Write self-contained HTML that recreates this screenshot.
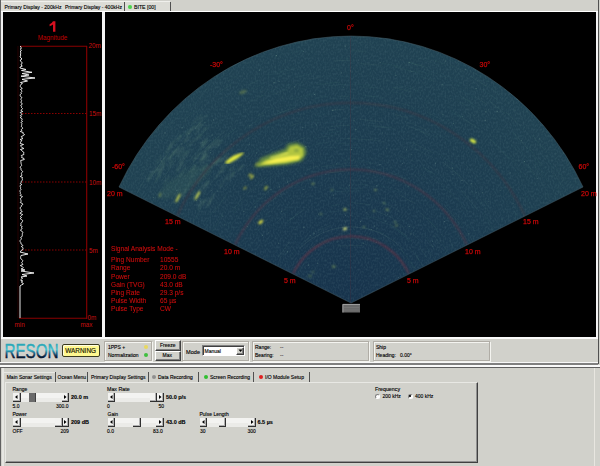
<!DOCTYPE html>
<html><head><meta charset="utf-8">
<style>
*{margin:0;padding:0;box-sizing:border-box}
html,body{width:600px;height:466px;overflow:hidden;background:#d1d1cb;font-family:"Liberation Sans",sans-serif;color:#000}
.abs{position:absolute}
.t{position:absolute;white-space:nowrap;color:#000;-webkit-text-stroke:0.12px #000}
svg{position:absolute;left:0;top:0}
</style></head><body>
<div class="abs" style="left:0px;top:0px;width:600px;height:12px;background:#d1d1cb"></div>
<div class="abs" style="left:1px;top:1px;width:169px;height:10px;background:#dcdcd6;border-top:1px solid #f0f0ec"></div>
<div class="t" style="left:4.5px;top:4.93px;font-size:5.05px;line-height:5.05px;">Primary Display - 200kHz</div>
<div class="t" style="left:65px;top:4.93px;font-size:5.05px;line-height:5.05px;">Primary Display - 400kHz</div>
<div class="abs" style="left:124px;top:2px;width:1px;height:9px;background:#505050"></div>
<div class="abs" style="left:127.5px;top:4.5px;width:4.5px;height:4.5px;border-radius:50%;background:#50d050;box-shadow:0 0 0.6px #a0f0a0"></div>
<div class="t" style="left:134px;top:4.79px;font-size:5.2px;line-height:5.2px;">BITE [00]</div>
<div class="abs" style="left:170px;top:2px;width:1px;height:9px;background:#505050"></div>
<div class="abs" style="left:0px;top:0px;width:1px;height:600px;background:#606060"></div>
<div class="abs" style="left:1px;top:11px;width:597px;height:1px;background:#fff"></div>
<div class="abs" style="left:1px;top:12px;width:2px;height:325px;background:#f0f0f0"></div>
<div class="abs" style="left:3px;top:12px;width:99px;height:325px;background:#000"></div>
<div class="abs" style="left:102px;top:12px;width:3px;height:325px;background:#f4f4f4"></div>
<div class="abs" style="left:105px;top:12px;width:491px;height:325px;background:#000"></div>
<div class="abs" style="left:596px;top:12px;width:2px;height:326px;background:#f4f4f4"></div>
<div class="abs" style="left:598px;top:0px;width:1px;height:364px;background:#505050"></div>
<svg width="105" height="337">
<g stroke="#8a0000" stroke-width="1.1" fill="none"><line x1="20" y1="46.3" x2="87" y2="46.3"/><line x1="19" y1="318.3" x2="87" y2="318.3"/><line x1="86.7" y1="46" x2="86.7" y2="319"/><line x1="18" y1="46" x2="18" y2="318" stroke="#300000" stroke-width="0.8"/><line x1="22" y1="113.5" x2="87" y2="113.5" stroke-dasharray="1.5,1.5"/><line x1="22" y1="182" x2="87" y2="182" stroke-dasharray="1.5,1.5"/><line x1="22" y1="250" x2="87" y2="250" stroke-dasharray="1.5,1.5"/></g>
<g fill="#c81010" font-family="Liberation Sans" font-size="6.3"><text x="88.5" y="48">20m</text><text x="89" y="116">15m</text><text x="89" y="184.5">10m</text><text x="89" y="252.5">5m</text><text x="87.5" y="320">0m</text><text x="14.5" y="327.3">min</text><text x="80.5" y="327.3">max</text></g>
<path d="M53,21.2 H55.4 V31.8 H53 V24.6 Q51.5,25.8 49.6,26.2 V24.2 Q52,23.2 53,21.2 Z" fill="#d81020"/>
<text x="52.5" y="40" text-anchor="middle" font-family="Liberation Sans" font-size="6.3" fill="#c00000">Magnitude</text>
<polyline points="20.8,46.0 20.4,47.0 21.6,48.0 20.2,49.0 21.3,50.0 20.9,51.0 20.1,52.0 21.2,53.0 20.1,54.0 21.0,55.0 20.2,56.0 20.2,57.0 21.0,58.0 22.0,59.0 20.3,60.0 20.5,61.0 21.5,62.0 22.3,63.0 21.4,64.0 21.0,65.0 22.3,66.0 20.1,67.0 20.0,68.0 26.0,69.5 21.5,70.5 32.0,72.3 22.0,73.5 29.0,75.0 21.0,76.2 35.0,78.0 22.0,79.3 27.5,81.0 20.5,82.5 22.4,83.5 20.8,84.5 20.4,85.5 20.3,86.5 20.9,87.5 22.3,88.5 20.5,89.5 21.6,90.5 21.8,91.5 21.0,92.5 21.5,93.5 20.2,94.5 20.2,95.5 20.6,96.5 21.9,97.5 21.2,98.5 20.9,99.5 21.6,100.5 21.3,101.5 20.8,102.5 22.2,103.5 22.0,104.5 20.7,105.5 21.6,106.5 21.5,107.5 22.5,108.5 22.0,109.5 20.8,110.5 22.7,111.5 20.3,112.5 21.2,113.5 22.1,114.5 20.4,115.5 21.4,116.5 20.1,117.5 21.9,118.5 22.1,119.5 21.6,120.5 22.5,121.5 20.9,122.5 21.9,123.5 21.7,124.5 21.6,125.5 21.3,126.5 22.4,127.5 22.6,128.5 21.3,129.5 21.9,130.5 20.3,131.5 23.2,132.5 22.9,133.5 24.5,134.5 23.7,135.5 21.3,136.5 21.7,137.5 23.0,138.5 20.1,139.5 22.1,140.5 20.8,141.5 20.5,142.5 20.3,143.5 23.5,144.5 20.6,145.5 21.1,146.5 21.8,147.5 23.9,148.5 20.4,149.5 22.0,150.5 22.5,151.5 24.0,152.5 23.7,153.5 23.9,154.5 21.3,155.5 21.9,156.5 21.6,157.5 24.0,158.5 24.3,159.5 20.7,160.5 20.8,161.5 21.0,162.5 21.1,163.5 21.4,164.5 21.6,165.5 20.7,166.5 20.0,167.5 21.2,168.5 21.0,169.5 21.6,170.5 22.7,171.5 21.9,172.5 21.4,173.5 21.7,174.5 21.9,175.5 20.2,176.5 22.5,177.5 22.2,178.5 22.4,179.5 22.2,180.5 21.1,181.5 21.1,182.5 20.3,183.5 21.8,184.5 20.2,185.5 20.2,186.5 20.6,187.5 20.5,188.5 21.0,189.5 20.1,190.5 20.0,191.5 20.4,192.5 20.3,193.5 21.0,194.5 20.1,195.5 22.4,196.5 21.7,197.5 20.4,198.5 20.7,199.5 21.0,200.5 21.0,201.5 20.3,202.5 22.4,203.5 22.8,204.5 21.3,205.5 21.4,206.5 20.2,207.5 20.3,208.5 21.0,209.5 20.7,210.5 22.3,211.5 20.5,212.5 20.1,213.5 22.7,214.5 21.5,215.5 20.4,216.5 21.5,217.5 20.1,218.5 21.5,219.5 22.7,220.5 22.4,221.5 21.9,222.5 20.7,223.5 21.0,224.5 20.5,225.5 22.2,226.5 21.5,227.5 22.2,228.5 20.9,229.5 20.6,230.5 22.3,231.5 22.8,232.5 22.4,233.5 22.3,234.5 22.3,235.5 22.1,236.5 20.6,237.5 21.4,238.5 21.0,239.5 20.1,240.5 20.1,241.5 20.8,242.5 20.8,243.5 22.1,244.5 22.9,245.5 21.3,246.5 22.8,247.5 23.0,248.5 22.9,249.5 21.1,250.5 20.7,251.5 20.0,252.0 28.0,254.0 21.0,255.5 20.7,256.5 20.6,257.5 20.6,258.5 21.9,259.5 22.7,260.5 22.5,261.5 21.7,262.5 22.3,263.5 22.8,264.5 20.3,265.5 22.3,266.5 23.2,267.5 22.7,268.5 21.0,269.0 25.0,270.0 21.0,271.0 34.0,273.0 22.0,274.5 27.0,276.0 21.0,277.0 22.6,278.0 21.7,279.0 20.6,280.0 22.8,281.0 21.2,282.0 22.8,283.0 23.4,284.0 21.4,285.0 20.0,286.0 20.0,287.0 20.0,288.0 20.0,289.0 20.0,290.0 20.0,291.0 20.0,292.0 20.0,293.0 20.0,294.0 20.0,295.0 20.0,296.0 20.0,297.0 20.0,298.0 20.0,299.0 20.0,300.0 20.0,301.0 20.0,302.0 20.0,303.0 20.0,304.0 20.0,305.0 20.0,306.0 20.0,307.0 20.0,308.0 20.0,309.0 20.0,310.0 20.0,311.0 20.0,312.0 20.0,313.0 20.0,314.0 20.0,315.0 20.0,316.0 20.0,317.0 20.0,318.0" stroke="#f4f4f4" stroke-width="0.95" fill="none"/>
</svg>
<svg width="600" height="337">
<defs><radialGradient id="fg" gradientUnits="userSpaceOnUse" cx="351.0" cy="303.0" r="267.0" gradientTransform="translate(351.0 303.0) scale(0.9648 1) translate(-351.0 -303.0)"><stop offset="0" stop-color="#17334c"/><stop offset="0.3" stop-color="#19374e"/><stop offset="0.6" stop-color="#1c3c50"/><stop offset="1" stop-color="#204252"/></radialGradient><clipPath id="fc"><path d="M351.0,303.0 L119.0,187.0 A257.6,267.0 0 0 1 583.0,187.0 Z"/></clipPath><filter id="nz" x="0" y="0" width="100%" height="100%"><feTurbulence type="fractalNoise" baseFrequency="0.6 0.45" numOctaves="1" seed="5"/><feColorMatrix values="0 0 0 0 0.25  0 0 0 0 0.42  0 0 0 0 0.45  0 0 0 1.4 -0.55"/></filter><filter id="bl"><feGaussianBlur stdDeviation="0.9"/></filter><filter id="bl2"><feGaussianBlur stdDeviation="3"/></filter></defs>
<path d="M351.0,303.0 L119.0,187.0 A257.6,267.0 0 0 1 583.0,187.0 Z" fill="url(#fg)"/>
<g clip-path="url(#fc)">
<rect x="105" y="30" width="490" height="280" filter="url(#nz)" opacity="0.22"/>
<g stroke-width="0.8"><line x1="485.3" y1="214.0" x2="494.6" y2="231.2" stroke="#5a8a7a" stroke-opacity="0.07"/><line x1="364.5" y1="235.2" x2="379.8" y2="240.6" stroke="#6a9080" stroke-opacity="0.12"/><line x1="283.4" y1="102.1" x2="300.5" y2="96.8" stroke="#4a7a78" stroke-opacity="0.06"/><line x1="461.8" y1="96.6" x2="469.4" y2="101.2" stroke="#5a8a7a" stroke-opacity="0.13"/><line x1="473.7" y1="187.6" x2="488.1" y2="206.7" stroke="#3a6a70" stroke-opacity="0.07"/><line x1="351.3" y1="179.7" x2="373.4" y2="181.9" stroke="#6a9080" stroke-opacity="0.09"/><line x1="156.7" y1="169.3" x2="169.5" y2="151.2" stroke="#6a9080" stroke-opacity="0.15"/><line x1="525.1" y1="143.8" x2="531.2" y2="151.3" stroke="#4a7a78" stroke-opacity="0.07"/><line x1="489.9" y1="101.3" x2="505.0" y2="113.5" stroke="#5a8a7a" stroke-opacity="0.14"/><line x1="344.5" y1="190.2" x2="365.9" y2="191.1" stroke="#3a6a70" stroke-opacity="0.11"/><line x1="365.4" y1="86.5" x2="381.8" y2="88.4" stroke="#4a7a78" stroke-opacity="0.14"/><line x1="290.0" y1="187.3" x2="310.4" y2="178.0" stroke="#4a7a78" stroke-opacity="0.11"/><line x1="528.1" y1="164.7" x2="537.1" y2="178.0" stroke="#5a8a7a" stroke-opacity="0.12"/><line x1="328.5" y1="85.5" x2="346.0" y2="84.3" stroke="#5a8a7a" stroke-opacity="0.10"/><line x1="509.6" y1="157.0" x2="525.5" y2="178.0" stroke="#5a8a7a" stroke-opacity="0.08"/><line x1="180.8" y1="136.4" x2="187.3" y2="129.5" stroke="#4a7a78" stroke-opacity="0.10"/><line x1="317.8" y1="90.7" x2="328.7" y2="89.1" stroke="#4a7a78" stroke-opacity="0.08"/><line x1="181.2" y1="123.3" x2="197.0" y2="108.6" stroke="#5a8a7a" stroke-opacity="0.12"/><line x1="257.8" y1="211.7" x2="269.6" y2="200.2" stroke="#4a7a78" stroke-opacity="0.13"/><line x1="346.5" y1="138.5" x2="373.2" y2="140.0" stroke="#5a8a7a" stroke-opacity="0.14"/><line x1="541.8" y1="204.3" x2="543.1" y2="207.0" stroke="#3a6a70" stroke-opacity="0.10"/><line x1="419.1" y1="173.2" x2="425.3" y2="176.9" stroke="#6a9080" stroke-opacity="0.11"/><line x1="296.4" y1="89.9" x2="313.2" y2="86.0" stroke="#4a7a78" stroke-opacity="0.08"/><line x1="426.2" y1="245.9" x2="432.4" y2="255.8" stroke="#4a7a78" stroke-opacity="0.15"/><line x1="238.5" y1="233.4" x2="251.6" y2="214.5" stroke="#5a8a7a" stroke-opacity="0.08"/><line x1="514.2" y1="133.4" x2="528.0" y2="149.0" stroke="#6a9080" stroke-opacity="0.15"/><line x1="434.3" y1="240.0" x2="443.7" y2="256.2" stroke="#4a7a78" stroke-opacity="0.13"/><line x1="434.5" y1="194.2" x2="442.4" y2="201.3" stroke="#3a6a70" stroke-opacity="0.15"/><line x1="424.9" y1="56.8" x2="446.4" y2="64.9" stroke="#5a8a7a" stroke-opacity="0.06"/><line x1="408.9" y1="246.3" x2="418.6" y2="259.4" stroke="#6a9080" stroke-opacity="0.09"/><line x1="228.1" y1="80.9" x2="236.3" y2="76.2" stroke="#5a8a7a" stroke-opacity="0.11"/><line x1="567.0" y1="175.3" x2="572.7" y2="186.2" stroke="#3a6a70" stroke-opacity="0.07"/><line x1="365.0" y1="95.7" x2="375.8" y2="96.8" stroke="#5a8a7a" stroke-opacity="0.10"/><line x1="434.2" y1="196.6" x2="453.2" y2="216.2" stroke="#4a7a78" stroke-opacity="0.05"/><line x1="375.9" y1="79.0" x2="386.3" y2="80.5" stroke="#6a9080" stroke-opacity="0.10"/><line x1="410.9" y1="231.5" x2="421.7" y2="243.0" stroke="#6a9080" stroke-opacity="0.10"/><line x1="245.1" y1="64.4" x2="255.3" y2="59.8" stroke="#5a8a7a" stroke-opacity="0.08"/><line x1="455.2" y1="87.0" x2="472.3" y2="96.9" stroke="#3a6a70" stroke-opacity="0.09"/><line x1="525.9" y1="110.6" x2="531.0" y2="115.7" stroke="#3a6a70" stroke-opacity="0.12"/><line x1="212.4" y1="210.1" x2="224.3" y2="193.3" stroke="#3a6a70" stroke-opacity="0.09"/><line x1="432.8" y1="119.1" x2="439.7" y2="122.6" stroke="#3a6a70" stroke-opacity="0.07"/><line x1="266.0" y1="152.9" x2="289.5" y2="141.0" stroke="#3a6a70" stroke-opacity="0.16"/><line x1="460.2" y1="237.2" x2="464.8" y2="246.1" stroke="#4a7a78" stroke-opacity="0.09"/><line x1="233.6" y1="212.9" x2="241.4" y2="202.9" stroke="#5a8a7a" stroke-opacity="0.12"/><line x1="190.8" y1="220.6" x2="196.5" y2="209.6" stroke="#6a9080" stroke-opacity="0.06"/><line x1="305.5" y1="108.2" x2="318.0" y2="105.5" stroke="#4a7a78" stroke-opacity="0.12"/><line x1="363.6" y1="103.3" x2="385.4" y2="106.0" stroke="#6a9080" stroke-opacity="0.12"/><line x1="456.7" y1="100.1" x2="471.1" y2="108.9" stroke="#5a8a7a" stroke-opacity="0.08"/><line x1="400.4" y1="248.3" x2="415.3" y2="268.7" stroke="#5a8a7a" stroke-opacity="0.12"/><line x1="482.4" y1="89.2" x2="497.4" y2="99.9" stroke="#4a7a78" stroke-opacity="0.14"/><line x1="394.5" y1="66.7" x2="418.6" y2="72.9" stroke="#5a8a7a" stroke-opacity="0.13"/><line x1="278.0" y1="257.3" x2="290.0" y2="241.3" stroke="#6a9080" stroke-opacity="0.16"/><line x1="381.6" y1="63.1" x2="400.7" y2="66.5" stroke="#5a8a7a" stroke-opacity="0.12"/><line x1="193.0" y1="222.5" x2="204.4" y2="202.0" stroke="#4a7a78" stroke-opacity="0.13"/><line x1="181.1" y1="183.1" x2="194.2" y2="165.3" stroke="#4a7a78" stroke-opacity="0.08"/><line x1="219.3" y1="101.2" x2="238.1" y2="89.3" stroke="#6a9080" stroke-opacity="0.08"/><line x1="304.9" y1="126.0" x2="321.0" y2="122.3" stroke="#4a7a78" stroke-opacity="0.13"/><line x1="413.5" y1="107.7" x2="421.3" y2="110.6" stroke="#3a6a70" stroke-opacity="0.07"/><line x1="436.6" y1="110.8" x2="453.8" y2="120.0" stroke="#6a9080" stroke-opacity="0.06"/><line x1="312.5" y1="233.0" x2="331.2" y2="225.1" stroke="#6a9080" stroke-opacity="0.13"/><line x1="356.1" y1="161.5" x2="372.1" y2="163.1" stroke="#4a7a78" stroke-opacity="0.10"/><line x1="379.2" y1="38.6" x2="392.1" y2="40.4" stroke="#6a9080" stroke-opacity="0.06"/><line x1="345.2" y1="237.8" x2="368.3" y2="240.0" stroke="#6a9080" stroke-opacity="0.16"/><line x1="286.5" y1="45.4" x2="311.3" y2="40.1" stroke="#4a7a78" stroke-opacity="0.15"/><line x1="212.5" y1="164.5" x2="225.1" y2="152.2" stroke="#5a8a7a" stroke-opacity="0.15"/><line x1="408.1" y1="108.5" x2="419.8" y2="112.6" stroke="#3a6a70" stroke-opacity="0.06"/><line x1="447.0" y1="222.8" x2="456.5" y2="236.8" stroke="#4a7a78" stroke-opacity="0.05"/><line x1="450.2" y1="64.7" x2="463.7" y2="71.2" stroke="#6a9080" stroke-opacity="0.13"/><line x1="291.7" y1="162.6" x2="314.1" y2="154.6" stroke="#3a6a70" stroke-opacity="0.05"/><line x1="174.9" y1="143.3" x2="192.7" y2="124.4" stroke="#3a6a70" stroke-opacity="0.13"/><line x1="244.8" y1="228.4" x2="253.6" y2="216.4" stroke="#4a7a78" stroke-opacity="0.15"/><line x1="326.7" y1="148.2" x2="338.9" y2="146.7" stroke="#4a7a78" stroke-opacity="0.06"/><line x1="377.6" y1="230.5" x2="394.8" y2="240.1" stroke="#3a6a70" stroke-opacity="0.07"/><line x1="284.2" y1="145.3" x2="305.3" y2="137.5" stroke="#6a9080" stroke-opacity="0.14"/><line x1="506.0" y1="112.1" x2="520.4" y2="125.7" stroke="#5a8a7a" stroke-opacity="0.15"/><line x1="168.6" y1="184.3" x2="180.9" y2="166.0" stroke="#5a8a7a" stroke-opacity="0.10"/><line x1="257.3" y1="116.2" x2="264.2" y2="112.7" stroke="#5a8a7a" stroke-opacity="0.15"/><line x1="330.4" y1="192.5" x2="342.7" y2="190.7" stroke="#3a6a70" stroke-opacity="0.08"/><line x1="262.3" y1="164.6" x2="276.5" y2="155.8" stroke="#4a7a78" stroke-opacity="0.12"/><line x1="276.9" y1="222.0" x2="285.2" y2="214.6" stroke="#6a9080" stroke-opacity="0.15"/><line x1="331.3" y1="110.3" x2="344.8" y2="109.3" stroke="#6a9080" stroke-opacity="0.13"/><line x1="287.0" y1="222.6" x2="293.9" y2="217.3" stroke="#4a7a78" stroke-opacity="0.09"/><line x1="309.5" y1="161.5" x2="332.0" y2="156.4" stroke="#4a7a78" stroke-opacity="0.07"/><line x1="308.2" y1="79.2" x2="323.1" y2="76.6" stroke="#6a9080" stroke-opacity="0.11"/><line x1="421.8" y1="187.4" x2="435.4" y2="197.6" stroke="#3a6a70" stroke-opacity="0.11"/><line x1="351.7" y1="202.6" x2="371.1" y2="204.8" stroke="#5a8a7a" stroke-opacity="0.14"/><line x1="418.9" y1="245.9" x2="427.1" y2="258.4" stroke="#6a9080" stroke-opacity="0.12"/><line x1="527.9" y1="118.4" x2="544.3" y2="137.1" stroke="#4a7a78" stroke-opacity="0.05"/><line x1="442.4" y1="161.9" x2="460.6" y2="176.5" stroke="#6a9080" stroke-opacity="0.16"/><line x1="337.3" y1="246.0" x2="362.6" y2="245.5" stroke="#6a9080" stroke-opacity="0.14"/><line x1="215.4" y1="80.8" x2="223.0" y2="76.0" stroke="#4a7a78" stroke-opacity="0.07"/><line x1="469.9" y1="76.0" x2="486.9" y2="86.5" stroke="#6a9080" stroke-opacity="0.13"/><line x1="400.6" y1="231.2" x2="405.9" y2="235.5" stroke="#4a7a78" stroke-opacity="0.06"/><line x1="264.4" y1="112.4" x2="272.9" y2="108.5" stroke="#6a9080" stroke-opacity="0.08"/><line x1="189.0" y1="161.3" x2="194.4" y2="154.9" stroke="#5a8a7a" stroke-opacity="0.11"/><line x1="259.9" y1="170.7" x2="275.9" y2="160.4" stroke="#3a6a70" stroke-opacity="0.05"/><line x1="228.5" y1="68.7" x2="240.2" y2="62.5" stroke="#5a8a7a" stroke-opacity="0.14"/><line x1="253.8" y1="154.1" x2="263.7" y2="147.6" stroke="#3a6a70" stroke-opacity="0.16"/><line x1="302.8" y1="242.0" x2="324.1" y2="229.3" stroke="#4a7a78" stroke-opacity="0.12"/><line x1="398.4" y1="178.4" x2="421.0" y2="190.4" stroke="#4a7a78" stroke-opacity="0.07"/><line x1="450.5" y1="109.5" x2="462.7" y2="116.8" stroke="#4a7a78" stroke-opacity="0.09"/><line x1="467.3" y1="100.3" x2="481.5" y2="109.8" stroke="#5a8a7a" stroke-opacity="0.07"/><line x1="443.8" y1="192.8" x2="452.1" y2="200.9" stroke="#3a6a70" stroke-opacity="0.07"/><line x1="376.2" y1="211.1" x2="393.9" y2="218.5" stroke="#6a9080" stroke-opacity="0.15"/><line x1="409.8" y1="146.1" x2="433.2" y2="157.8" stroke="#6a9080" stroke-opacity="0.07"/><line x1="284.6" y1="265.2" x2="295.6" y2="249.4" stroke="#4a7a78" stroke-opacity="0.10"/><line x1="338.4" y1="187.7" x2="359.5" y2="187.3" stroke="#4a7a78" stroke-opacity="0.08"/><line x1="562.9" y1="151.8" x2="570.2" y2="163.5" stroke="#6a9080" stroke-opacity="0.07"/><line x1="375.6" y1="237.0" x2="388.4" y2="243.8" stroke="#3a6a70" stroke-opacity="0.09"/><line x1="222.4" y1="192.1" x2="227.9" y2="185.6" stroke="#6a9080" stroke-opacity="0.06"/><line x1="163.3" y1="130.0" x2="181.7" y2="110.6" stroke="#3a6a70" stroke-opacity="0.07"/><line x1="258.2" y1="92.7" x2="279.5" y2="83.9" stroke="#6a9080" stroke-opacity="0.06"/><line x1="361.7" y1="184.5" x2="377.2" y2="187.1" stroke="#6a9080" stroke-opacity="0.09"/><line x1="337.5" y1="234.2" x2="360.6" y2="233.5" stroke="#4a7a78" stroke-opacity="0.13"/><line x1="338.6" y1="143.6" x2="361.6" y2="143.5" stroke="#5a8a7a" stroke-opacity="0.06"/><line x1="522.3" y1="160.3" x2="530.5" y2="171.6" stroke="#4a7a78" stroke-opacity="0.08"/><line x1="411.9" y1="183.6" x2="423.2" y2="190.5" stroke="#4a7a78" stroke-opacity="0.08"/><line x1="396.9" y1="84.6" x2="419.1" y2="90.9" stroke="#4a7a78" stroke-opacity="0.15"/><line x1="314.1" y1="246.8" x2="328.7" y2="239.1" stroke="#6a9080" stroke-opacity="0.16"/><line x1="532.2" y1="162.2" x2="545.1" y2="182.2" stroke="#6a9080" stroke-opacity="0.06"/><line x1="421.1" y1="212.9" x2="436.6" y2="228.6" stroke="#5a8a7a" stroke-opacity="0.14"/><line x1="276.9" y1="114.0" x2="289.2" y2="109.3" stroke="#4a7a78" stroke-opacity="0.09"/><line x1="307.7" y1="121.8" x2="317.4" y2="119.6" stroke="#4a7a78" stroke-opacity="0.09"/><line x1="368.4" y1="122.9" x2="378.4" y2="124.2" stroke="#4a7a78" stroke-opacity="0.10"/><line x1="222.3" y1="73.8" x2="229.6" y2="69.5" stroke="#6a9080" stroke-opacity="0.06"/><line x1="574.1" y1="173.0" x2="579.0" y2="182.4" stroke="#6a9080" stroke-opacity="0.06"/><line x1="426.8" y1="112.2" x2="446.5" y2="122.0" stroke="#4a7a78" stroke-opacity="0.14"/><line x1="250.7" y1="94.4" x2="262.0" y2="89.0" stroke="#3a6a70" stroke-opacity="0.08"/><line x1="214.6" y1="126.3" x2="224.0" y2="118.9" stroke="#5a8a7a" stroke-opacity="0.08"/><line x1="457.6" y1="217.8" x2="463.7" y2="226.8" stroke="#3a6a70" stroke-opacity="0.06"/><line x1="355.2" y1="37.2" x2="366.6" y2="37.6" stroke="#6a9080" stroke-opacity="0.14"/><line x1="151.5" y1="136.2" x2="162.2" y2="123.3" stroke="#6a9080" stroke-opacity="0.14"/><line x1="140.7" y1="172.3" x2="147.5" y2="161.2" stroke="#5a8a7a" stroke-opacity="0.06"/><line x1="482.3" y1="152.6" x2="490.0" y2="160.2" stroke="#5a8a7a" stroke-opacity="0.06"/><line x1="264.6" y1="153.0" x2="284.6" y2="142.4" stroke="#4a7a78" stroke-opacity="0.15"/><line x1="442.5" y1="116.4" x2="454.6" y2="123.3" stroke="#3a6a70" stroke-opacity="0.05"/><line x1="288.8" y1="220.5" x2="298.5" y2="213.5" stroke="#5a8a7a" stroke-opacity="0.12"/><line x1="502.0" y1="122.8" x2="513.0" y2="133.4" stroke="#3a6a70" stroke-opacity="0.09"/><line x1="278.9" y1="260.2" x2="288.6" y2="246.1" stroke="#6a9080" stroke-opacity="0.10"/><line x1="330.1" y1="212.3" x2="347.7" y2="209.8" stroke="#4a7a78" stroke-opacity="0.12"/><line x1="304.5" y1="96.6" x2="316.5" y2="94.0" stroke="#3a6a70" stroke-opacity="0.16"/><line x1="213.6" y1="212.8" x2="226.5" y2="194.6" stroke="#6a9080" stroke-opacity="0.15"/><line x1="469.3" y1="187.8" x2="486.0" y2="209.7" stroke="#5a8a7a" stroke-opacity="0.09"/><line x1="317.7" y1="143.7" x2="343.3" y2="140.2" stroke="#5a8a7a" stroke-opacity="0.10"/><line x1="458.8" y1="175.2" x2="469.6" y2="186.0" stroke="#6a9080" stroke-opacity="0.15"/><line x1="185.8" y1="146.4" x2="191.2" y2="140.5" stroke="#6a9080" stroke-opacity="0.07"/><line x1="374.4" y1="216.8" x2="387.7" y2="221.9" stroke="#5a8a7a" stroke-opacity="0.11"/><line x1="248.7" y1="191.1" x2="256.4" y2="184.1" stroke="#6a9080" stroke-opacity="0.06"/><line x1="462.3" y1="161.4" x2="481.4" y2="180.1" stroke="#5a8a7a" stroke-opacity="0.07"/><line x1="151.4" y1="177.0" x2="165.6" y2="155.5" stroke="#6a9080" stroke-opacity="0.08"/><line x1="390.2" y1="224.2" x2="407.3" y2="236.2" stroke="#5a8a7a" stroke-opacity="0.15"/><line x1="401.7" y1="103.4" x2="412.0" y2="106.5" stroke="#5a8a7a" stroke-opacity="0.10"/><line x1="410.6" y1="261.9" x2="415.5" y2="270.8" stroke="#5a8a7a" stroke-opacity="0.09"/><line x1="412.3" y1="187.8" x2="432.8" y2="202.4" stroke="#4a7a78" stroke-opacity="0.05"/><line x1="271.5" y1="104.9" x2="285.2" y2="99.6" stroke="#3a6a70" stroke-opacity="0.10"/><line x1="266.0" y1="110.9" x2="276.8" y2="106.2" stroke="#3a6a70" stroke-opacity="0.09"/><line x1="327.8" y1="130.4" x2="335.0" y2="129.5" stroke="#6a9080" stroke-opacity="0.12"/><line x1="330.6" y1="126.4" x2="349.8" y2="125.2" stroke="#5a8a7a" stroke-opacity="0.14"/><line x1="300.1" y1="70.9" x2="308.0" y2="69.2" stroke="#3a6a70" stroke-opacity="0.09"/><line x1="339.7" y1="213.4" x2="356.7" y2="212.8" stroke="#5a8a7a" stroke-opacity="0.05"/><line x1="393.2" y1="227.3" x2="410.9" y2="241.4" stroke="#4a7a78" stroke-opacity="0.11"/><line x1="521.8" y1="158.3" x2="533.7" y2="174.9" stroke="#4a7a78" stroke-opacity="0.14"/><line x1="563.3" y1="194.5" x2="564.2" y2="196.4" stroke="#5a8a7a" stroke-opacity="0.14"/><line x1="425.9" y1="236.8" x2="433.4" y2="247.3" stroke="#5a8a7a" stroke-opacity="0.14"/><line x1="450.9" y1="111.6" x2="460.6" y2="117.4" stroke="#3a6a70" stroke-opacity="0.14"/><line x1="433.0" y1="234.1" x2="440.2" y2="244.4" stroke="#5a8a7a" stroke-opacity="0.14"/><line x1="461.9" y1="235.7" x2="466.8" y2="245.1" stroke="#5a8a7a" stroke-opacity="0.12"/><line x1="228.0" y1="228.0" x2="233.7" y2="218.9" stroke="#3a6a70" stroke-opacity="0.07"/><line x1="512.9" y1="166.2" x2="519.1" y2="174.5" stroke="#4a7a78" stroke-opacity="0.14"/><line x1="161.8" y1="180.5" x2="175.6" y2="160.1" stroke="#6a9080" stroke-opacity="0.16"/><line x1="384.5" y1="111.4" x2="408.4" y2="117.6" stroke="#6a9080" stroke-opacity="0.06"/><line x1="288.9" y1="86.1" x2="302.8" y2="82.3" stroke="#5a8a7a" stroke-opacity="0.09"/><line x1="435.6" y1="173.1" x2="448.1" y2="182.9" stroke="#4a7a78" stroke-opacity="0.07"/><line x1="356.0" y1="160.2" x2="368.9" y2="161.3" stroke="#3a6a70" stroke-opacity="0.16"/><line x1="465.5" y1="111.3" x2="474.9" y2="117.7" stroke="#6a9080" stroke-opacity="0.08"/><line x1="302.2" y1="142.3" x2="309.6" y2="140.1" stroke="#4a7a78" stroke-opacity="0.10"/><line x1="292.7" y1="273.4" x2="300.1" y2="261.2" stroke="#3a6a70" stroke-opacity="0.06"/><line x1="315.4" y1="115.8" x2="328.1" y2="113.6" stroke="#3a6a70" stroke-opacity="0.06"/><line x1="339.8" y1="96.4" x2="349.2" y2="96.1" stroke="#5a8a7a" stroke-opacity="0.15"/><line x1="327.5" y1="83.1" x2="335.5" y2="82.4" stroke="#3a6a70" stroke-opacity="0.07"/><line x1="270.5" y1="160.3" x2="276.6" y2="156.7" stroke="#3a6a70" stroke-opacity="0.12"/><line x1="385.1" y1="104.3" x2="403.5" y2="108.7" stroke="#6a9080" stroke-opacity="0.11"/><line x1="451.1" y1="221.5" x2="455.6" y2="227.9" stroke="#6a9080" stroke-opacity="0.11"/><line x1="273.3" y1="218.9" x2="293.2" y2="203.1" stroke="#5a8a7a" stroke-opacity="0.06"/><line x1="287.8" y1="221.0" x2="303.7" y2="210.2" stroke="#6a9080" stroke-opacity="0.11"/><line x1="197.6" y1="125.3" x2="207.6" y2="116.6" stroke="#4a7a78" stroke-opacity="0.08"/><line x1="474.8" y1="69.8" x2="488.9" y2="78.5" stroke="#6a9080" stroke-opacity="0.11"/><line x1="473.7" y1="95.5" x2="487.2" y2="104.7" stroke="#6a9080" stroke-opacity="0.13"/><line x1="449.5" y1="252.8" x2="449.9" y2="253.6" stroke="#4a7a78" stroke-opacity="0.12"/><line x1="428.6" y1="174.7" x2="445.4" y2="187.4" stroke="#4a7a78" stroke-opacity="0.14"/><line x1="366.8" y1="168.0" x2="382.1" y2="170.9" stroke="#3a6a70" stroke-opacity="0.14"/><line x1="463.9" y1="221.3" x2="475.0" y2="241.0" stroke="#4a7a78" stroke-opacity="0.06"/><line x1="436.4" y1="233.9" x2="448.6" y2="254.2" stroke="#5a8a7a" stroke-opacity="0.07"/><line x1="267.9" y1="92.3" x2="291.1" y2="84.0" stroke="#5a8a7a" stroke-opacity="0.09"/><line x1="461.1" y1="189.8" x2="477.4" y2="209.9" stroke="#6a9080" stroke-opacity="0.16"/><line x1="362.9" y1="124.2" x2="369.7" y2="124.9" stroke="#5a8a7a" stroke-opacity="0.05"/><line x1="271.4" y1="123.6" x2="281.5" y2="119.2" stroke="#4a7a78" stroke-opacity="0.12"/><line x1="223.6" y1="157.4" x2="229.2" y2="152.4" stroke="#5a8a7a" stroke-opacity="0.06"/><line x1="244.5" y1="196.4" x2="249.7" y2="191.1" stroke="#4a7a78" stroke-opacity="0.05"/><line x1="458.2" y1="113.8" x2="465.1" y2="118.1" stroke="#3a6a70" stroke-opacity="0.11"/><line x1="449.5" y1="240.2" x2="455.2" y2="250.9" stroke="#6a9080" stroke-opacity="0.12"/><line x1="294.8" y1="228.0" x2="302.2" y2="222.6" stroke="#4a7a78" stroke-opacity="0.05"/><line x1="418.4" y1="73.1" x2="430.3" y2="77.2" stroke="#4a7a78" stroke-opacity="0.06"/><line x1="424.1" y1="80.5" x2="436.0" y2="85.1" stroke="#3a6a70" stroke-opacity="0.09"/><line x1="317.6" y1="245.9" x2="328.8" y2="240.3" stroke="#3a6a70" stroke-opacity="0.13"/><line x1="489.9" y1="94.3" x2="505.0" y2="106.0" stroke="#3a6a70" stroke-opacity="0.10"/><line x1="178.4" y1="200.9" x2="186.4" y2="187.6" stroke="#4a7a78" stroke-opacity="0.10"/><line x1="416.8" y1="165.1" x2="432.1" y2="174.1" stroke="#4a7a78" stroke-opacity="0.07"/><line x1="263.1" y1="127.0" x2="277.2" y2="120.1" stroke="#3a6a70" stroke-opacity="0.11"/><line x1="546.0" y1="192.8" x2="549.2" y2="199.1" stroke="#6a9080" stroke-opacity="0.10"/><line x1="492.0" y1="139.6" x2="510.4" y2="159.0" stroke="#3a6a70" stroke-opacity="0.12"/><line x1="218.2" y1="159.6" x2="235.9" y2="144.0" stroke="#5a8a7a" stroke-opacity="0.15"/><line x1="214.6" y1="184.9" x2="228.0" y2="170.1" stroke="#4a7a78" stroke-opacity="0.06"/><line x1="287.3" y1="106.1" x2="301.5" y2="101.8" stroke="#4a7a78" stroke-opacity="0.09"/><line x1="403.5" y1="142.6" x2="416.8" y2="148.0" stroke="#6a9080" stroke-opacity="0.08"/><line x1="351.6" y1="50.8" x2="366.1" y2="51.3" stroke="#5a8a7a" stroke-opacity="0.15"/><line x1="165.7" y1="129.7" x2="178.8" y2="115.8" stroke="#4a7a78" stroke-opacity="0.13"/><line x1="294.6" y1="160.3" x2="303.9" y2="156.7" stroke="#3a6a70" stroke-opacity="0.14"/><line x1="336.2" y1="191.8" x2="358.5" y2="191.0" stroke="#5a8a7a" stroke-opacity="0.11"/><line x1="396.9" y1="159.5" x2="416.1" y2="167.8" stroke="#3a6a70" stroke-opacity="0.11"/><line x1="412.1" y1="173.7" x2="432.5" y2="186.4" stroke="#5a8a7a" stroke-opacity="0.07"/><line x1="472.9" y1="72.0" x2="489.1" y2="82.1" stroke="#5a8a7a" stroke-opacity="0.09"/><line x1="258.2" y1="188.1" x2="280.0" y2="172.5" stroke="#4a7a78" stroke-opacity="0.13"/><line x1="388.1" y1="198.9" x2="398.0" y2="203.3" stroke="#5a8a7a" stroke-opacity="0.07"/><line x1="464.5" y1="99.0" x2="477.7" y2="107.5" stroke="#4a7a78" stroke-opacity="0.07"/><line x1="453.2" y1="212.5" x2="463.0" y2="225.8" stroke="#6a9080" stroke-opacity="0.05"/><line x1="351.2" y1="84.1" x2="370.7" y2="85.1" stroke="#5a8a7a" stroke-opacity="0.10"/><line x1="416.8" y1="187.7" x2="422.6" y2="191.5" stroke="#6a9080" stroke-opacity="0.08"/><line x1="392.4" y1="87.1" x2="411.6" y2="92.0" stroke="#5a8a7a" stroke-opacity="0.14"/><line x1="416.2" y1="97.3" x2="431.1" y2="103.0" stroke="#4a7a78" stroke-opacity="0.08"/><line x1="218.7" y1="92.6" x2="231.3" y2="84.6" stroke="#5a8a7a" stroke-opacity="0.13"/><line x1="329.2" y1="172.7" x2="345.1" y2="170.9" stroke="#6a9080" stroke-opacity="0.12"/><line x1="415.1" y1="127.2" x2="437.3" y2="137.7" stroke="#3a6a70" stroke-opacity="0.15"/><line x1="295.5" y1="77.4" x2="311.8" y2="73.7" stroke="#4a7a78" stroke-opacity="0.16"/><line x1="275.4" y1="196.1" x2="293.5" y2="184.7" stroke="#5a8a7a" stroke-opacity="0.15"/><line x1="209.5" y1="185.3" x2="221.7" y2="171.1" stroke="#6a9080" stroke-opacity="0.11"/><line x1="406.4" y1="125.3" x2="428.2" y2="134.2" stroke="#6a9080" stroke-opacity="0.11"/><line x1="329.9" y1="77.1" x2="356.6" y2="76.1" stroke="#4a7a78" stroke-opacity="0.07"/><line x1="405.9" y1="85.5" x2="424.6" y2="91.5" stroke="#6a9080" stroke-opacity="0.08"/><line x1="209.9" y1="227.0" x2="217.5" y2="213.4" stroke="#3a6a70" stroke-opacity="0.10"/><line x1="203.3" y1="175.5" x2="211.9" y2="165.5" stroke="#5a8a7a" stroke-opacity="0.09"/><line x1="571.6" y1="166.8" x2="579.4" y2="181.4" stroke="#4a7a78" stroke-opacity="0.07"/><line x1="419.1" y1="75.8" x2="434.4" y2="81.4" stroke="#5a8a7a" stroke-opacity="0.11"/><line x1="186.9" y1="135.6" x2="201.7" y2="121.3" stroke="#6a9080" stroke-opacity="0.14"/><line x1="274.4" y1="143.2" x2="290.8" y2="135.9" stroke="#6a9080" stroke-opacity="0.06"/><line x1="457.2" y1="193.1" x2="465.5" y2="202.4" stroke="#3a6a70" stroke-opacity="0.09"/><line x1="450.6" y1="59.5" x2="465.6" y2="66.7" stroke="#3a6a70" stroke-opacity="0.14"/><line x1="402.2" y1="156.0" x2="414.4" y2="161.3" stroke="#4a7a78" stroke-opacity="0.10"/><line x1="288.6" y1="100.0" x2="313.3" y2="93.5" stroke="#4a7a78" stroke-opacity="0.14"/><line x1="363.3" y1="215.5" x2="376.3" y2="218.6" stroke="#3a6a70" stroke-opacity="0.15"/><line x1="172.8" y1="206.1" x2="176.2" y2="199.8" stroke="#3a6a70" stroke-opacity="0.15"/><line x1="251.6" y1="220.2" x2="257.9" y2="212.6" stroke="#6a9080" stroke-opacity="0.08"/><line x1="246.8" y1="193.6" x2="266.0" y2="177.0" stroke="#5a8a7a" stroke-opacity="0.14"/><line x1="431.7" y1="116.5" x2="455.1" y2="129.4" stroke="#3a6a70" stroke-opacity="0.06"/><line x1="399.3" y1="194.6" x2="414.5" y2="203.4" stroke="#6a9080" stroke-opacity="0.13"/><line x1="193.9" y1="162.5" x2="200.0" y2="155.5" stroke="#5a8a7a" stroke-opacity="0.10"/><line x1="373.1" y1="125.1" x2="389.4" y2="128.1" stroke="#6a9080" stroke-opacity="0.15"/><line x1="264.4" y1="207.0" x2="279.1" y2="194.8" stroke="#5a8a7a" stroke-opacity="0.13"/><line x1="334.2" y1="60.8" x2="352.3" y2="60.2" stroke="#6a9080" stroke-opacity="0.12"/><line x1="323.1" y1="145.9" x2="349.1" y2="143.2" stroke="#3a6a70" stroke-opacity="0.06"/><line x1="175.3" y1="200.3" x2="185.4" y2="183.6" stroke="#3a6a70" stroke-opacity="0.13"/><line x1="169.9" y1="157.2" x2="180.5" y2="144.1" stroke="#5a8a7a" stroke-opacity="0.13"/><line x1="383.4" y1="239.9" x2="399.0" y2="251.7" stroke="#3a6a70" stroke-opacity="0.09"/><line x1="437.2" y1="179.1" x2="451.0" y2="190.9" stroke="#3a6a70" stroke-opacity="0.15"/><line x1="322.3" y1="133.6" x2="340.1" y2="131.4" stroke="#3a6a70" stroke-opacity="0.14"/><line x1="348.9" y1="147.4" x2="362.4" y2="147.8" stroke="#3a6a70" stroke-opacity="0.16"/><line x1="437.3" y1="55.4" x2="458.3" y2="64.4" stroke="#3a6a70" stroke-opacity="0.09"/><line x1="192.1" y1="153.9" x2="211.0" y2="134.8" stroke="#4a7a78" stroke-opacity="0.06"/><line x1="370.3" y1="139.5" x2="385.0" y2="142.1" stroke="#6a9080" stroke-opacity="0.11"/><line x1="226.9" y1="238.7" x2="232.0" y2="229.1" stroke="#4a7a78" stroke-opacity="0.15"/><line x1="530.9" y1="160.7" x2="541.9" y2="177.0" stroke="#4a7a78" stroke-opacity="0.12"/><line x1="394.5" y1="188.3" x2="408.9" y2="195.4" stroke="#4a7a78" stroke-opacity="0.13"/><line x1="502.9" y1="158.4" x2="512.8" y2="170.4" stroke="#4a7a78" stroke-opacity="0.06"/><line x1="452.2" y1="184.2" x2="468.1" y2="201.0" stroke="#3a6a70" stroke-opacity="0.11"/><line x1="196.7" y1="115.8" x2="202.5" y2="110.9" stroke="#4a7a78" stroke-opacity="0.05"/><line x1="359.8" y1="119.2" x2="383.1" y2="122.0" stroke="#6a9080" stroke-opacity="0.14"/><line x1="505.4" y1="185.8" x2="514.2" y2="199.4" stroke="#6a9080" stroke-opacity="0.05"/><line x1="524.9" y1="212.6" x2="526.2" y2="215.4" stroke="#6a9080" stroke-opacity="0.07"/><line x1="200.7" y1="188.1" x2="211.0" y2="175.0" stroke="#4a7a78" stroke-opacity="0.15"/><line x1="204.5" y1="225.8" x2="214.8" y2="207.7" stroke="#4a7a78" stroke-opacity="0.16"/><line x1="260.7" y1="220.7" x2="272.3" y2="208.8" stroke="#5a8a7a" stroke-opacity="0.08"/><line x1="438.9" y1="153.6" x2="459.6" y2="168.9" stroke="#5a8a7a" stroke-opacity="0.09"/><line x1="176.8" y1="169.0" x2="189.0" y2="153.3" stroke="#6a9080" stroke-opacity="0.13"/><line x1="510.0" y1="165.3" x2="525.0" y2="186.3" stroke="#4a7a78" stroke-opacity="0.06"/><line x1="297.0" y1="273.7" x2="308.9" y2="257.3" stroke="#4a7a78" stroke-opacity="0.14"/><line x1="286.9" y1="154.5" x2="304.6" y2="147.6" stroke="#6a9080" stroke-opacity="0.16"/><line x1="272.1" y1="115.8" x2="296.4" y2="106.7" stroke="#6a9080" stroke-opacity="0.13"/><line x1="202.0" y1="151.9" x2="218.8" y2="135.9" stroke="#5a8a7a" stroke-opacity="0.09"/><line x1="314.3" y1="98.6" x2="328.7" y2="96.3" stroke="#3a6a70" stroke-opacity="0.14"/><line x1="384.7" y1="71.8" x2="397.1" y2="74.1" stroke="#3a6a70" stroke-opacity="0.06"/><line x1="466.7" y1="86.7" x2="472.8" y2="90.4" stroke="#3a6a70" stroke-opacity="0.07"/><line x1="520.1" y1="206.7" x2="524.8" y2="216.1" stroke="#6a9080" stroke-opacity="0.09"/><line x1="503.0" y1="174.9" x2="516.5" y2="194.4" stroke="#4a7a78" stroke-opacity="0.08"/><line x1="279.8" y1="174.2" x2="288.6" y2="169.4" stroke="#4a7a78" stroke-opacity="0.15"/><line x1="252.8" y1="205.3" x2="271.5" y2="188.5" stroke="#5a8a7a" stroke-opacity="0.16"/><line x1="445.2" y1="205.8" x2="460.0" y2="224.1" stroke="#6a9080" stroke-opacity="0.13"/><line x1="231.9" y1="211.1" x2="243.5" y2="196.9" stroke="#5a8a7a" stroke-opacity="0.14"/><line x1="459.1" y1="97.1" x2="481.6" y2="111.7" stroke="#4a7a78" stroke-opacity="0.08"/><line x1="334.8" y1="87.5" x2="345.7" y2="86.9" stroke="#4a7a78" stroke-opacity="0.08"/><line x1="330.5" y1="69.0" x2="339.0" y2="68.3" stroke="#4a7a78" stroke-opacity="0.14"/><line x1="373.0" y1="176.9" x2="396.8" y2="184.0" stroke="#3a6a70" stroke-opacity="0.15"/><line x1="385.6" y1="126.6" x2="395.9" y2="129.1" stroke="#5a8a7a" stroke-opacity="0.07"/><line x1="247.0" y1="91.6" x2="263.8" y2="83.6" stroke="#5a8a7a" stroke-opacity="0.09"/><line x1="453.9" y1="226.4" x2="462.8" y2="241.1" stroke="#3a6a70" stroke-opacity="0.15"/><line x1="471.8" y1="136.3" x2="479.6" y2="142.7" stroke="#3a6a70" stroke-opacity="0.12"/><line x1="383.0" y1="167.7" x2="391.3" y2="170.1" stroke="#6a9080" stroke-opacity="0.07"/><line x1="235.2" y1="142.6" x2="256.5" y2="128.2" stroke="#4a7a78" stroke-opacity="0.08"/><line x1="492.0" y1="89.1" x2="510.6" y2="103.7" stroke="#3a6a70" stroke-opacity="0.16"/><line x1="268.0" y1="75.5" x2="293.6" y2="67.1" stroke="#4a7a78" stroke-opacity="0.09"/><line x1="360.6" y1="226.3" x2="383.8" y2="233.5" stroke="#4a7a78" stroke-opacity="0.10"/><line x1="424.3" y1="68.8" x2="448.0" y2="78.2" stroke="#4a7a78" stroke-opacity="0.13"/><line x1="369.6" y1="170.5" x2="388.8" y2="175.0" stroke="#6a9080" stroke-opacity="0.16"/><line x1="429.8" y1="221.1" x2="439.2" y2="232.2" stroke="#5a8a7a" stroke-opacity="0.08"/><line x1="442.1" y1="241.1" x2="449.1" y2="253.9" stroke="#4a7a78" stroke-opacity="0.06"/><line x1="152.4" y1="175.4" x2="165.2" y2="156.0" stroke="#6a9080" stroke-opacity="0.13"/><line x1="296.5" y1="247.8" x2="314.0" y2="234.0" stroke="#3a6a70" stroke-opacity="0.15"/><line x1="325.5" y1="103.8" x2="345.4" y2="102.2" stroke="#3a6a70" stroke-opacity="0.10"/><line x1="254.6" y1="213.9" x2="266.3" y2="201.9" stroke="#5a8a7a" stroke-opacity="0.07"/><line x1="534.6" y1="160.8" x2="548.3" y2="182.2" stroke="#5a8a7a" stroke-opacity="0.10"/><line x1="192.5" y1="133.4" x2="210.3" y2="117.3" stroke="#3a6a70" stroke-opacity="0.06"/><line x1="176.5" y1="130.1" x2="187.8" y2="118.6" stroke="#6a9080" stroke-opacity="0.06"/><line x1="417.6" y1="70.0" x2="432.7" y2="75.2" stroke="#5a8a7a" stroke-opacity="0.09"/><line x1="400.3" y1="130.2" x2="409.5" y2="133.3" stroke="#4a7a78" stroke-opacity="0.07"/><line x1="338.9" y1="188.6" x2="363.6" y2="188.7" stroke="#5a8a7a" stroke-opacity="0.10"/><line x1="325.2" y1="169.6" x2="335.0" y2="168.0" stroke="#3a6a70" stroke-opacity="0.08"/><line x1="252.1" y1="191.8" x2="265.0" y2="180.9" stroke="#6a9080" stroke-opacity="0.08"/><line x1="433.3" y1="256.7" x2="435.3" y2="260.8" stroke="#5a8a7a" stroke-opacity="0.15"/><line x1="479.9" y1="160.2" x2="486.4" y2="166.8" stroke="#3a6a70" stroke-opacity="0.13"/><line x1="266.7" y1="155.6" x2="276.9" y2="149.8" stroke="#6a9080" stroke-opacity="0.08"/><line x1="456.8" y1="213.9" x2="461.6" y2="220.4" stroke="#3a6a70" stroke-opacity="0.13"/><line x1="382.4" y1="202.6" x2="396.9" y2="208.8" stroke="#5a8a7a" stroke-opacity="0.11"/><line x1="452.2" y1="164.8" x2="471.5" y2="182.6" stroke="#3a6a70" stroke-opacity="0.08"/><line x1="483.4" y1="199.4" x2="489.8" y2="208.8" stroke="#5a8a7a" stroke-opacity="0.11"/><line x1="362.4" y1="60.1" x2="373.8" y2="60.9" stroke="#4a7a78" stroke-opacity="0.07"/><line x1="529.1" y1="148.2" x2="542.2" y2="166.0" stroke="#5a8a7a" stroke-opacity="0.13"/><line x1="380.3" y1="185.3" x2="400.1" y2="192.6" stroke="#3a6a70" stroke-opacity="0.14"/><line x1="254.7" y1="235.2" x2="268.4" y2="218.0" stroke="#4a7a78" stroke-opacity="0.09"/><line x1="290.2" y1="125.9" x2="302.1" y2="122.0" stroke="#6a9080" stroke-opacity="0.12"/><line x1="333.5" y1="214.9" x2="355.6" y2="213.2" stroke="#3a6a70" stroke-opacity="0.06"/><line x1="368.9" y1="172.5" x2="394.8" y2="179.2" stroke="#3a6a70" stroke-opacity="0.05"/><line x1="488.6" y1="165.3" x2="497.9" y2="176.1" stroke="#4a7a78" stroke-opacity="0.15"/><line x1="395.2" y1="215.3" x2="414.3" y2="229.0" stroke="#3a6a70" stroke-opacity="0.15"/><line x1="516.2" y1="145.0" x2="528.1" y2="159.5" stroke="#3a6a70" stroke-opacity="0.15"/><line x1="554.5" y1="173.0" x2="562.8" y2="188.1" stroke="#5a8a7a" stroke-opacity="0.11"/><line x1="406.7" y1="269.7" x2="408.9" y2="274.0" stroke="#4a7a78" stroke-opacity="0.07"/><line x1="368.5" y1="157.8" x2="393.9" y2="163.6" stroke="#5a8a7a" stroke-opacity="0.05"/><line x1="440.3" y1="204.9" x2="453.5" y2="219.9" stroke="#5a8a7a" stroke-opacity="0.10"/><line x1="185.7" y1="164.4" x2="202.0" y2="145.7" stroke="#4a7a78" stroke-opacity="0.13"/><line x1="340.5" y1="165.9" x2="359.1" y2="165.7" stroke="#4a7a78" stroke-opacity="0.13"/><line x1="330.9" y1="205.9" x2="340.3" y2="204.3" stroke="#5a8a7a" stroke-opacity="0.12"/><line x1="367.7" y1="198.1" x2="388.7" y2="204.1" stroke="#4a7a78" stroke-opacity="0.07"/><line x1="289.6" y1="53.3" x2="304.5" y2="49.9" stroke="#4a7a78" stroke-opacity="0.14"/><line x1="483.3" y1="213.0" x2="493.5" y2="231.7" stroke="#5a8a7a" stroke-opacity="0.09"/><line x1="459.7" y1="88.3" x2="480.2" y2="100.9" stroke="#3a6a70" stroke-opacity="0.11"/><line x1="512.9" y1="133.2" x2="518.4" y2="139.0" stroke="#3a6a70" stroke-opacity="0.11"/><line x1="328.9" y1="172.9" x2="348.3" y2="171.0" stroke="#5a8a7a" stroke-opacity="0.09"/><line x1="339.0" y1="220.6" x2="355.9" y2="219.8" stroke="#5a8a7a" stroke-opacity="0.05"/><line x1="313.7" y1="138.4" x2="340.3" y2="134.3" stroke="#4a7a78" stroke-opacity="0.10"/><line x1="525.2" y1="148.2" x2="540.2" y2="168.5" stroke="#3a6a70" stroke-opacity="0.05"/><line x1="418.2" y1="58.0" x2="436.7" y2="64.3" stroke="#4a7a78" stroke-opacity="0.14"/><line x1="245.3" y1="128.0" x2="260.3" y2="119.2" stroke="#4a7a78" stroke-opacity="0.10"/><line x1="293.5" y1="175.3" x2="312.1" y2="168.0" stroke="#3a6a70" stroke-opacity="0.06"/><line x1="368.1" y1="216.6" x2="392.0" y2="225.8" stroke="#5a8a7a" stroke-opacity="0.10"/><line x1="544.4" y1="154.1" x2="554.8" y2="169.9" stroke="#4a7a78" stroke-opacity="0.08"/><line x1="250.5" y1="101.7" x2="264.9" y2="94.6" stroke="#5a8a7a" stroke-opacity="0.13"/><line x1="224.2" y1="137.2" x2="241.4" y2="124.5" stroke="#3a6a70" stroke-opacity="0.10"/><line x1="337.2" y1="98.5" x2="350.3" y2="98.0" stroke="#5a8a7a" stroke-opacity="0.08"/><line x1="362.6" y1="186.4" x2="388.3" y2="192.3" stroke="#3a6a70" stroke-opacity="0.09"/><line x1="441.4" y1="244.7" x2="446.9" y2="255.1" stroke="#3a6a70" stroke-opacity="0.09"/><line x1="471.2" y1="238.5" x2="472.9" y2="242.1" stroke="#5a8a7a" stroke-opacity="0.13"/><line x1="395.0" y1="114.5" x2="408.3" y2="118.4" stroke="#6a9080" stroke-opacity="0.12"/><line x1="276.0" y1="74.0" x2="297.3" y2="67.7" stroke="#5a8a7a" stroke-opacity="0.11"/><line x1="410.8" y1="146.5" x2="419.6" y2="150.5" stroke="#3a6a70" stroke-opacity="0.07"/><line x1="360.2" y1="63.5" x2="381.8" y2="65.4" stroke="#6a9080" stroke-opacity="0.13"/><line x1="389.1" y1="172.2" x2="407.3" y2="179.5" stroke="#6a9080" stroke-opacity="0.13"/><line x1="137.0" y1="193.3" x2="147.7" y2="173.2" stroke="#6a9080" stroke-opacity="0.11"/><line x1="492.8" y1="229.2" x2="493.9" y2="231.6" stroke="#3a6a70" stroke-opacity="0.14"/><line x1="408.0" y1="62.4" x2="421.9" y2="66.4" stroke="#6a9080" stroke-opacity="0.10"/><line x1="306.8" y1="169.6" x2="320.2" y2="165.7" stroke="#6a9080" stroke-opacity="0.11"/><line x1="168.9" y1="208.4" x2="179.7" y2="188.7" stroke="#6a9080" stroke-opacity="0.16"/><line x1="242.0" y1="171.1" x2="252.1" y2="162.8" stroke="#6a9080" stroke-opacity="0.07"/><line x1="197.4" y1="182.8" x2="214.0" y2="162.9" stroke="#5a8a7a" stroke-opacity="0.09"/><line x1="196.1" y1="97.4" x2="208.5" y2="88.0" stroke="#4a7a78" stroke-opacity="0.15"/><line x1="316.7" y1="244.5" x2="339.9" y2="235.5" stroke="#3a6a70" stroke-opacity="0.08"/><line x1="517.2" y1="219.1" x2="517.5" y2="219.7" stroke="#6a9080" stroke-opacity="0.11"/><line x1="301.7" y1="148.4" x2="319.9" y2="143.4" stroke="#4a7a78" stroke-opacity="0.09"/><line x1="362.8" y1="87.3" x2="371.5" y2="88.1" stroke="#6a9080" stroke-opacity="0.09"/><line x1="518.0" y1="182.0" x2="523.5" y2="190.5" stroke="#6a9080" stroke-opacity="0.07"/><line x1="327.5" y1="122.7" x2="346.8" y2="121.1" stroke="#3a6a70" stroke-opacity="0.16"/><line x1="461.7" y1="117.0" x2="468.9" y2="121.8" stroke="#3a6a70" stroke-opacity="0.09"/><line x1="521.0" y1="106.6" x2="533.3" y2="118.9" stroke="#3a6a70" stroke-opacity="0.06"/><line x1="489.7" y1="138.8" x2="508.7" y2="158.3" stroke="#6a9080" stroke-opacity="0.15"/><line x1="361.8" y1="95.1" x2="384.9" y2="97.8" stroke="#5a8a7a" stroke-opacity="0.07"/><line x1="216.3" y1="210.6" x2="227.2" y2="195.6" stroke="#4a7a78" stroke-opacity="0.06"/><line x1="163.3" y1="203.3" x2="166.5" y2="197.1" stroke="#4a7a78" stroke-opacity="0.13"/><line x1="295.1" y1="55.1" x2="303.6" y2="53.2" stroke="#4a7a78" stroke-opacity="0.05"/><line x1="350.4" y1="183.8" x2="368.3" y2="185.1" stroke="#5a8a7a" stroke-opacity="0.08"/><line x1="313.1" y1="108.7" x2="322.2" y2="107.1" stroke="#4a7a78" stroke-opacity="0.07"/><line x1="296.3" y1="262.5" x2="315.0" y2="244.1" stroke="#6a9080" stroke-opacity="0.10"/><line x1="476.6" y1="144.6" x2="482.6" y2="149.9" stroke="#3a6a70" stroke-opacity="0.05"/><line x1="294.7" y1="215.2" x2="305.3" y2="208.8" stroke="#4a7a78" stroke-opacity="0.05"/><line x1="551.0" y1="171.1" x2="555.2" y2="178.2" stroke="#6a9080" stroke-opacity="0.07"/><line x1="313.5" y1="249.4" x2="326.3" y2="241.9" stroke="#4a7a78" stroke-opacity="0.13"/><line x1="395.4" y1="136.4" x2="406.6" y2="140.1" stroke="#5a8a7a" stroke-opacity="0.05"/><line x1="461.6" y1="211.0" x2="474.6" y2="231.0" stroke="#3a6a70" stroke-opacity="0.08"/><line x1="348.5" y1="41.9" x2="374.4" y2="43.1" stroke="#6a9080" stroke-opacity="0.08"/><line x1="390.4" y1="91.2" x2="405.1" y2="94.7" stroke="#6a9080" stroke-opacity="0.09"/><line x1="398.7" y1="257.4" x2="404.1" y2="264.2" stroke="#6a9080" stroke-opacity="0.07"/><line x1="449.1" y1="245.7" x2="452.4" y2="252.3" stroke="#4a7a78" stroke-opacity="0.11"/><line x1="459.1" y1="201.2" x2="467.7" y2="212.0" stroke="#4a7a78" stroke-opacity="0.12"/><line x1="481.7" y1="201.2" x2="491.6" y2="216.7" stroke="#6a9080" stroke-opacity="0.09"/><line x1="275.9" y1="186.6" x2="282.2" y2="182.5" stroke="#3a6a70" stroke-opacity="0.12"/><line x1="225.8" y1="104.5" x2="233.8" y2="99.4" stroke="#5a8a7a" stroke-opacity="0.07"/><line x1="337.1" y1="108.9" x2="359.9" y2="108.6" stroke="#3a6a70" stroke-opacity="0.08"/><line x1="422.6" y1="166.8" x2="434.9" y2="174.5" stroke="#5a8a7a" stroke-opacity="0.16"/><line x1="343.6" y1="160.1" x2="354.4" y2="160.0" stroke="#5a8a7a" stroke-opacity="0.14"/><line x1="575.0" y1="189.7" x2="575.5" y2="190.8" stroke="#3a6a70" stroke-opacity="0.10"/><line x1="311.7" y1="116.5" x2="328.5" y2="113.5" stroke="#4a7a78" stroke-opacity="0.06"/><line x1="185.5" y1="171.4" x2="201.2" y2="152.6" stroke="#6a9080" stroke-opacity="0.13"/><line x1="382.6" y1="241.6" x2="390.8" y2="246.9" stroke="#4a7a78" stroke-opacity="0.05"/><line x1="473.7" y1="124.6" x2="482.8" y2="131.7" stroke="#4a7a78" stroke-opacity="0.07"/><line x1="415.1" y1="253.3" x2="423.1" y2="266.9" stroke="#5a8a7a" stroke-opacity="0.13"/><line x1="318.4" y1="228.0" x2="329.0" y2="223.9" stroke="#6a9080" stroke-opacity="0.06"/><line x1="322.0" y1="166.6" x2="346.9" y2="163.4" stroke="#5a8a7a" stroke-opacity="0.14"/><line x1="186.1" y1="110.3" x2="196.9" y2="100.9" stroke="#3a6a70" stroke-opacity="0.14"/><line x1="138.8" y1="181.1" x2="149.7" y2="162.5" stroke="#6a9080" stroke-opacity="0.10"/><line x1="393.6" y1="154.4" x2="403.5" y2="157.9" stroke="#5a8a7a" stroke-opacity="0.06"/><line x1="167.3" y1="188.8" x2="171.2" y2="182.2" stroke="#5a8a7a" stroke-opacity="0.07"/><line x1="196.8" y1="138.5" x2="213.0" y2="123.6" stroke="#5a8a7a" stroke-opacity="0.11"/><line x1="242.3" y1="142.1" x2="256.5" y2="132.8" stroke="#6a9080" stroke-opacity="0.11"/><line x1="385.8" y1="91.1" x2="410.8" y2="97.2" stroke="#3a6a70" stroke-opacity="0.06"/><line x1="532.4" y1="134.9" x2="544.2" y2="149.8" stroke="#5a8a7a" stroke-opacity="0.13"/><line x1="170.8" y1="192.9" x2="177.9" y2="181.4" stroke="#3a6a70" stroke-opacity="0.14"/><line x1="174.8" y1="166.3" x2="188.0" y2="149.6" stroke="#5a8a7a" stroke-opacity="0.09"/><line x1="244.0" y1="218.5" x2="261.6" y2="198.8" stroke="#3a6a70" stroke-opacity="0.10"/><line x1="458.5" y1="115.0" x2="478.1" y2="128.6" stroke="#6a9080" stroke-opacity="0.12"/><line x1="420.3" y1="131.3" x2="430.2" y2="136.0" stroke="#5a8a7a" stroke-opacity="0.12"/><line x1="238.0" y1="163.0" x2="259.1" y2="147.3" stroke="#3a6a70" stroke-opacity="0.14"/><line x1="276.0" y1="220.2" x2="293.9" y2="206.1" stroke="#3a6a70" stroke-opacity="0.08"/><line x1="244.5" y1="230.3" x2="252.8" y2="218.6" stroke="#5a8a7a" stroke-opacity="0.10"/><line x1="204.3" y1="159.4" x2="219.3" y2="144.6" stroke="#6a9080" stroke-opacity="0.10"/><line x1="282.7" y1="194.7" x2="297.7" y2="186.1" stroke="#3a6a70" stroke-opacity="0.10"/><line x1="195.7" y1="153.5" x2="210.8" y2="138.3" stroke="#5a8a7a" stroke-opacity="0.11"/><line x1="445.7" y1="188.2" x2="458.5" y2="201.0" stroke="#5a8a7a" stroke-opacity="0.13"/><line x1="205.2" y1="148.5" x2="225.4" y2="130.6" stroke="#6a9080" stroke-opacity="0.14"/><line x1="173.9" y1="146.4" x2="182.3" y2="136.7" stroke="#5a8a7a" stroke-opacity="0.09"/><line x1="407.0" y1="255.8" x2="414.2" y2="266.9" stroke="#3a6a70" stroke-opacity="0.06"/><line x1="222.5" y1="190.2" x2="231.5" y2="180.0" stroke="#3a6a70" stroke-opacity="0.10"/><line x1="368.5" y1="162.9" x2="376.1" y2="164.1" stroke="#6a9080" stroke-opacity="0.10"/><line x1="390.7" y1="225.2" x2="411.9" y2="241.7" stroke="#4a7a78" stroke-opacity="0.11"/><line x1="524.6" y1="193.5" x2="532.7" y2="208.6" stroke="#3a6a70" stroke-opacity="0.14"/><line x1="399.3" y1="266.5" x2="404.8" y2="276.1" stroke="#3a6a70" stroke-opacity="0.12"/><line x1="185.1" y1="179.0" x2="198.8" y2="161.4" stroke="#6a9080" stroke-opacity="0.05"/><line x1="247.8" y1="85.3" x2="257.3" y2="80.7" stroke="#5a8a7a" stroke-opacity="0.12"/><line x1="393.5" y1="220.5" x2="404.5" y2="227.7" stroke="#6a9080" stroke-opacity="0.12"/><line x1="425.7" y1="216.4" x2="435.0" y2="226.1" stroke="#3a6a70" stroke-opacity="0.09"/><line x1="228.3" y1="96.8" x2="235.1" y2="92.6" stroke="#6a9080" stroke-opacity="0.06"/><line x1="555.9" y1="166.0" x2="564.5" y2="180.9" stroke="#5a8a7a" stroke-opacity="0.10"/><line x1="409.6" y1="43.7" x2="428.3" y2="49.0" stroke="#5a8a7a" stroke-opacity="0.07"/><line x1="337.4" y1="193.2" x2="363.7" y2="193.1" stroke="#4a7a78" stroke-opacity="0.06"/><line x1="340.1" y1="58.9" x2="351.3" y2="58.7" stroke="#4a7a78" stroke-opacity="0.09"/><line x1="518.5" y1="133.3" x2="533.6" y2="150.9" stroke="#3a6a70" stroke-opacity="0.10"/><line x1="282.7" y1="257.3" x2="296.3" y2="240.6" stroke="#4a7a78" stroke-opacity="0.15"/><line x1="411.6" y1="142.2" x2="432.8" y2="152.6" stroke="#5a8a7a" stroke-opacity="0.15"/><line x1="212.1" y1="231.9" x2="223.8" y2="211.4" stroke="#5a8a7a" stroke-opacity="0.12"/><line x1="367.5" y1="125.3" x2="384.5" y2="127.9" stroke="#5a8a7a" stroke-opacity="0.10"/><line x1="569.4" y1="168.8" x2="578.6" y2="186.4" stroke="#4a7a78" stroke-opacity="0.14"/><line x1="271.4" y1="95.0" x2="290.3" y2="88.3" stroke="#6a9080" stroke-opacity="0.11"/><line x1="340.2" y1="43.3" x2="360.0" y2="43.2" stroke="#3a6a70" stroke-opacity="0.08"/><line x1="405.2" y1="121.3" x2="427.5" y2="130.2" stroke="#6a9080" stroke-opacity="0.07"/><line x1="201.0" y1="149.5" x2="214.5" y2="136.5" stroke="#6a9080" stroke-opacity="0.11"/><line x1="267.8" y1="172.2" x2="281.4" y2="164.0" stroke="#5a8a7a" stroke-opacity="0.08"/><line x1="436.2" y1="229.2" x2="446.5" y2="244.3" stroke="#3a6a70" stroke-opacity="0.06"/><line x1="219.5" y1="141.4" x2="235.6" y2="128.7" stroke="#5a8a7a" stroke-opacity="0.13"/><line x1="243.0" y1="144.0" x2="258.5" y2="133.8" stroke="#4a7a78" stroke-opacity="0.06"/><line x1="443.4" y1="78.1" x2="464.0" y2="88.4" stroke="#4a7a78" stroke-opacity="0.06"/><line x1="522.8" y1="196.7" x2="531.0" y2="212.3" stroke="#6a9080" stroke-opacity="0.10"/><line x1="512.2" y1="207.0" x2="517.3" y2="216.7" stroke="#4a7a78" stroke-opacity="0.10"/><line x1="408.9" y1="218.8" x2="415.2" y2="223.8" stroke="#3a6a70" stroke-opacity="0.08"/><line x1="382.3" y1="236.3" x2="403.2" y2="252.2" stroke="#4a7a78" stroke-opacity="0.10"/><line x1="315.7" y1="84.8" x2="340.3" y2="82.1" stroke="#5a8a7a" stroke-opacity="0.12"/><line x1="503.4" y1="186.8" x2="516.5" y2="208.0" stroke="#3a6a70" stroke-opacity="0.07"/><line x1="466.5" y1="98.5" x2="472.4" y2="102.2" stroke="#5a8a7a" stroke-opacity="0.08"/><line x1="429.0" y1="165.7" x2="450.1" y2="181.2" stroke="#4a7a78" stroke-opacity="0.13"/><line x1="276.6" y1="76.8" x2="289.9" y2="72.6" stroke="#4a7a78" stroke-opacity="0.09"/><line x1="405.9" y1="259.6" x2="412.2" y2="269.8" stroke="#6a9080" stroke-opacity="0.09"/><line x1="408.4" y1="272.4" x2="409.1" y2="273.9" stroke="#6a9080" stroke-opacity="0.14"/><line x1="408.8" y1="228.1" x2="416.6" y2="235.3" stroke="#3a6a70" stroke-opacity="0.11"/><line x1="439.8" y1="72.8" x2="461.3" y2="83.0" stroke="#3a6a70" stroke-opacity="0.11"/><line x1="427.2" y1="128.4" x2="447.6" y2="139.6" stroke="#4a7a78" stroke-opacity="0.15"/><line x1="409.9" y1="272.6" x2="410.2" y2="273.4" stroke="#4a7a78" stroke-opacity="0.10"/><line x1="154.1" y1="183.7" x2="159.6" y2="174.5" stroke="#6a9080" stroke-opacity="0.14"/><line x1="554.3" y1="181.7" x2="562.3" y2="197.4" stroke="#5a8a7a" stroke-opacity="0.10"/><line x1="409.8" y1="62.8" x2="417.8" y2="65.1" stroke="#5a8a7a" stroke-opacity="0.09"/><line x1="247.1" y1="204.1" x2="261.2" y2="190.3" stroke="#3a6a70" stroke-opacity="0.07"/><line x1="271.0" y1="94.4" x2="286.3" y2="88.7" stroke="#3a6a70" stroke-opacity="0.15"/><line x1="361.4" y1="242.9" x2="374.3" y2="246.9" stroke="#6a9080" stroke-opacity="0.05"/><line x1="408.8" y1="62.0" x2="427.5" y2="67.7" stroke="#5a8a7a" stroke-opacity="0.13"/><line x1="286.4" y1="182.9" x2="301.6" y2="175.4" stroke="#5a8a7a" stroke-opacity="0.08"/><line x1="129.2" y1="169.5" x2="138.8" y2="153.7" stroke="#5a8a7a" stroke-opacity="0.13"/></g>
<g stroke-width="1.1" filter="url(#bl)"><line x1="187.8" y1="147.2" x2="195.3" y2="139.2" stroke="#90b890" stroke-opacity="0.20"/><line x1="219.6" y1="162.4" x2="227.5" y2="154.9" stroke="#90b890" stroke-opacity="0.34"/><line x1="176.7" y1="171.4" x2="183.7" y2="162.0" stroke="#90b890" stroke-opacity="0.29"/><line x1="201.0" y1="159.5" x2="206.4" y2="153.7" stroke="#90b890" stroke-opacity="0.25"/><line x1="182.3" y1="197.1" x2="186.3" y2="190.5" stroke="#90b890" stroke-opacity="0.19"/><line x1="169.1" y1="146.8" x2="175.1" y2="139.6" stroke="#90b890" stroke-opacity="0.18"/><line x1="202.6" y1="187.2" x2="206.2" y2="182.5" stroke="#90b890" stroke-opacity="0.12"/><line x1="173.7" y1="153.8" x2="179.9" y2="146.3" stroke="#90b890" stroke-opacity="0.25"/><line x1="192.1" y1="194.5" x2="195.2" y2="189.9" stroke="#90b890" stroke-opacity="0.19"/><line x1="215.1" y1="164.4" x2="221.3" y2="158.1" stroke="#90b890" stroke-opacity="0.34"/><line x1="223.0" y1="153.5" x2="229.9" y2="147.5" stroke="#90b890" stroke-opacity="0.14"/><line x1="214.9" y1="177.7" x2="222.5" y2="169.4" stroke="#90b890" stroke-opacity="0.20"/><line x1="177.5" y1="159.6" x2="185.6" y2="149.7" stroke="#90b890" stroke-opacity="0.14"/><line x1="215.5" y1="147.1" x2="220.9" y2="142.2" stroke="#90b890" stroke-opacity="0.18"/><line x1="207.6" y1="205.4" x2="211.0" y2="200.2" stroke="#90b890" stroke-opacity="0.28"/><line x1="205.5" y1="185.2" x2="209.3" y2="180.3" stroke="#90b890" stroke-opacity="0.26"/><line x1="184.2" y1="142.0" x2="189.5" y2="136.4" stroke="#90b890" stroke-opacity="0.29"/><line x1="176.8" y1="140.3" x2="181.4" y2="135.1" stroke="#90b890" stroke-opacity="0.31"/><line x1="168.0" y1="161.0" x2="172.3" y2="155.2" stroke="#90b890" stroke-opacity="0.16"/><line x1="211.9" y1="145.6" x2="219.4" y2="138.8" stroke="#90b890" stroke-opacity="0.33"/><line x1="203.0" y1="189.3" x2="208.9" y2="181.5" stroke="#90b890" stroke-opacity="0.27"/><line x1="208.2" y1="162.1" x2="213.4" y2="156.6" stroke="#90b890" stroke-opacity="0.13"/><line x1="181.3" y1="197.7" x2="186.4" y2="189.4" stroke="#90b890" stroke-opacity="0.20"/><line x1="199.9" y1="162.2" x2="204.8" y2="156.8" stroke="#90b890" stroke-opacity="0.23"/><line x1="237.8" y1="170.3" x2="243.7" y2="165.1" stroke="#90b890" stroke-opacity="0.35"/><line x1="222.4" y1="181.8" x2="228.6" y2="175.1" stroke="#90b890" stroke-opacity="0.20"/><line x1="203.4" y1="203.2" x2="206.4" y2="198.4" stroke="#90b890" stroke-opacity="0.30"/><line x1="229.3" y1="171.1" x2="234.6" y2="166.1" stroke="#90b890" stroke-opacity="0.24"/><line x1="193.2" y1="160.3" x2="200.1" y2="152.4" stroke="#90b890" stroke-opacity="0.26"/><line x1="214.7" y1="162.6" x2="219.5" y2="157.7" stroke="#90b890" stroke-opacity="0.28"/><line x1="196.1" y1="139.5" x2="202.0" y2="133.6" stroke="#90b890" stroke-opacity="0.30"/><line x1="168.2" y1="149.2" x2="173.6" y2="142.5" stroke="#90b890" stroke-opacity="0.24"/><line x1="154.8" y1="172.7" x2="158.2" y2="167.4" stroke="#90b890" stroke-opacity="0.23"/><line x1="201.0" y1="144.9" x2="207.1" y2="139.0" stroke="#90b890" stroke-opacity="0.35"/><line x1="220.3" y1="166.9" x2="224.2" y2="163.0" stroke="#90b890" stroke-opacity="0.13"/><line x1="197.9" y1="206.9" x2="202.1" y2="200.0" stroke="#90b890" stroke-opacity="0.25"/><line x1="231.0" y1="160.9" x2="236.4" y2="156.2" stroke="#90b890" stroke-opacity="0.15"/><line x1="221.8" y1="170.3" x2="229.5" y2="162.7" stroke="#90b890" stroke-opacity="0.16"/><line x1="230.6" y1="175.7" x2="234.9" y2="171.5" stroke="#90b890" stroke-opacity="0.35"/><line x1="201.5" y1="159.9" x2="206.9" y2="154.1" stroke="#90b890" stroke-opacity="0.30"/><line x1="189.5" y1="179.2" x2="196.7" y2="169.8" stroke="#90b890" stroke-opacity="0.14"/><line x1="163.8" y1="185.0" x2="169.5" y2="175.7" stroke="#90b890" stroke-opacity="0.21"/><line x1="156.1" y1="180.6" x2="161.7" y2="171.5" stroke="#90b890" stroke-opacity="0.21"/><line x1="198.8" y1="122.1" x2="207.3" y2="114.8" stroke="#90b890" stroke-opacity="0.17"/><line x1="198.4" y1="191.2" x2="203.0" y2="184.8" stroke="#90b890" stroke-opacity="0.17"/><line x1="221.6" y1="168.0" x2="228.1" y2="161.6" stroke="#90b890" stroke-opacity="0.19"/><line x1="155.6" y1="164.7" x2="162.0" y2="155.5" stroke="#90b890" stroke-opacity="0.16"/><line x1="196.8" y1="129.2" x2="202.8" y2="123.7" stroke="#90b890" stroke-opacity="0.29"/><line x1="168.1" y1="167.0" x2="173.2" y2="159.9" stroke="#90b890" stroke-opacity="0.23"/><line x1="158.9" y1="172.5" x2="165.4" y2="162.7" stroke="#90b890" stroke-opacity="0.26"/><line x1="201.1" y1="165.2" x2="209.0" y2="156.5" stroke="#90b890" stroke-opacity="0.17"/><line x1="168.5" y1="159.3" x2="176.1" y2="149.5" stroke="#90b890" stroke-opacity="0.32"/><line x1="227.4" y1="164.2" x2="235.8" y2="156.7" stroke="#90b890" stroke-opacity="0.19"/><line x1="205.8" y1="208.1" x2="211.6" y2="199.2" stroke="#90b890" stroke-opacity="0.12"/><line x1="157.2" y1="172.5" x2="164.0" y2="162.3" stroke="#90b890" stroke-opacity="0.14"/><line x1="219.8" y1="173.3" x2="223.5" y2="169.3" stroke="#90b890" stroke-opacity="0.20"/><line x1="185.4" y1="135.3" x2="194.8" y2="125.8" stroke="#90b890" stroke-opacity="0.35"/><line x1="209.4" y1="201.4" x2="214.9" y2="193.7" stroke="#90b890" stroke-opacity="0.28"/><line x1="219.0" y1="187.8" x2="222.9" y2="183.2" stroke="#90b890" stroke-opacity="0.22"/><line x1="198.3" y1="210.1" x2="204.0" y2="200.7" stroke="#90b890" stroke-opacity="0.19"/><line x1="157.8" y1="175.9" x2="163.3" y2="167.3" stroke="#90b890" stroke-opacity="0.15"/><line x1="185.4" y1="189.1" x2="191.2" y2="180.6" stroke="#90b890" stroke-opacity="0.15"/><line x1="182.9" y1="156.7" x2="187.2" y2="151.6" stroke="#90b890" stroke-opacity="0.20"/><line x1="216.0" y1="145.5" x2="221.9" y2="140.3" stroke="#90b890" stroke-opacity="0.17"/><line x1="192.9" y1="123.1" x2="202.0" y2="114.9" stroke="#90b890" stroke-opacity="0.18"/><line x1="202.5" y1="194.1" x2="205.6" y2="189.7" stroke="#90b890" stroke-opacity="0.13"/><line x1="190.5" y1="172.3" x2="196.4" y2="164.8" stroke="#90b890" stroke-opacity="0.20"/><line x1="227.7" y1="180.6" x2="233.6" y2="174.5" stroke="#90b890" stroke-opacity="0.25"/><line x1="201.8" y1="154.6" x2="210.7" y2="145.6" stroke="#90b890" stroke-opacity="0.32"/><line x1="179.1" y1="163.9" x2="184.2" y2="157.3" stroke="#90b890" stroke-opacity="0.22"/><line x1="165.0" y1="153.8" x2="170.9" y2="146.3" stroke="#90b890" stroke-opacity="0.21"/><line x1="235.5" y1="160.5" x2="239.1" y2="157.4" stroke="#90b890" stroke-opacity="0.26"/><line x1="161.1" y1="164.7" x2="167.7" y2="155.5" stroke="#90b890" stroke-opacity="0.21"/><line x1="196.6" y1="195.2" x2="199.8" y2="190.4" stroke="#90b890" stroke-opacity="0.31"/><line x1="202.6" y1="131.1" x2="207.3" y2="126.9" stroke="#90b890" stroke-opacity="0.28"/><line x1="210.6" y1="167.7" x2="216.7" y2="161.2" stroke="#90b890" stroke-opacity="0.19"/><line x1="147.4" y1="181.1" x2="153.9" y2="170.2" stroke="#90b890" stroke-opacity="0.32"/><line x1="198.9" y1="161.8" x2="207.5" y2="152.5" stroke="#90b890" stroke-opacity="0.17"/><line x1="200.6" y1="147.9" x2="206.6" y2="141.8" stroke="#90b890" stroke-opacity="0.28"/><line x1="201.7" y1="170.7" x2="208.0" y2="163.5" stroke="#90b890" stroke-opacity="0.28"/><line x1="209.9" y1="168.6" x2="215.9" y2="162.2" stroke="#90b890" stroke-opacity="0.17"/><line x1="178.8" y1="176.6" x2="186.1" y2="166.5" stroke="#90b890" stroke-opacity="0.23"/><line x1="184.8" y1="156.2" x2="191.0" y2="149.0" stroke="#90b890" stroke-opacity="0.17"/><line x1="232.1" y1="163.5" x2="238.3" y2="158.2" stroke="#90b890" stroke-opacity="0.24"/><line x1="209.0" y1="149.2" x2="214.2" y2="144.2" stroke="#90b890" stroke-opacity="0.16"/><line x1="176.6" y1="155.5" x2="183.7" y2="146.9" stroke="#90b890" stroke-opacity="0.31"/><line x1="195.3" y1="127.7" x2="200.0" y2="123.3" stroke="#90b890" stroke-opacity="0.21"/><line x1="195.2" y1="133.7" x2="200.2" y2="128.8" stroke="#90b890" stroke-opacity="0.16"/><line x1="192.6" y1="200.2" x2="196.6" y2="193.9" stroke="#90b890" stroke-opacity="0.30"/><line x1="191.9" y1="169.2" x2="195.7" y2="164.4" stroke="#90b890" stroke-opacity="0.21"/></g>
<ellipse cx="185" cy="182" rx="30" ry="9" transform="rotate(-30 185 182)" fill="#6a9a70" opacity="0.12" filter="url(#b12)"/>
<g><rect x="458.3" y="60.8" width="1" height="1" fill="#8ab0a0" fill-opacity="0.28"/><rect x="452.1" y="167.5" width="1" height="1" fill="#8ab0a0" fill-opacity="0.38"/><rect x="387.2" y="213.7" width="1" height="1" fill="#8ab0a0" fill-opacity="0.26"/><rect x="256.0" y="152.5" width="1" height="1" fill="#8ab0a0" fill-opacity="0.26"/><rect x="315.4" y="165.8" width="1" height="1" fill="#8ab0a0" fill-opacity="0.16"/><rect x="367.4" y="194.6" width="1" height="1" fill="#8ab0a0" fill-opacity="0.17"/><rect x="397.6" y="210.7" width="1" height="1" fill="#8ab0a0" fill-opacity="0.23"/><rect x="278.9" y="186.4" width="1" height="1" fill="#8ab0a0" fill-opacity="0.40"/><rect x="374.2" y="225.6" width="1" height="1" fill="#8ab0a0" fill-opacity="0.41"/><rect x="333.1" y="194.6" width="1" height="1" fill="#8ab0a0" fill-opacity="0.39"/><rect x="297.4" y="112.1" width="1" height="1" fill="#8ab0a0" fill-opacity="0.16"/><rect x="305.3" y="146.0" width="1" height="1" fill="#8ab0a0" fill-opacity="0.36"/><rect x="325.3" y="173.7" width="1" height="1" fill="#8ab0a0" fill-opacity="0.34"/><rect x="278.6" y="81.0" width="1" height="1" fill="#8ab0a0" fill-opacity="0.27"/><rect x="499.8" y="189.9" width="1" height="1" fill="#8ab0a0" fill-opacity="0.21"/><rect x="465.1" y="69.0" width="1" height="1" fill="#8ab0a0" fill-opacity="0.26"/><rect x="277.3" y="109.8" width="1" height="1" fill="#8ab0a0" fill-opacity="0.17"/><rect x="294.0" y="86.4" width="1" height="1" fill="#8ab0a0" fill-opacity="0.31"/><rect x="481.8" y="192.3" width="1" height="1" fill="#8ab0a0" fill-opacity="0.38"/><rect x="363.1" y="242.7" width="1" height="1" fill="#8ab0a0" fill-opacity="0.29"/><rect x="461.5" y="180.0" width="1" height="1" fill="#8ab0a0" fill-opacity="0.27"/><rect x="475.7" y="192.1" width="1" height="1" fill="#8ab0a0" fill-opacity="0.28"/><rect x="355.4" y="129.1" width="1" height="1" fill="#8ab0a0" fill-opacity="0.40"/><rect x="452.9" y="123.0" width="1" height="1" fill="#8ab0a0" fill-opacity="0.27"/><rect x="375.7" y="241.9" width="1" height="1" fill="#8ab0a0" fill-opacity="0.32"/><rect x="473.8" y="115.2" width="1" height="1" fill="#8ab0a0" fill-opacity="0.19"/><rect x="262.1" y="234.8" width="1" height="1" fill="#8ab0a0" fill-opacity="0.40"/><rect x="287.1" y="251.4" width="1" height="1" fill="#8ab0a0" fill-opacity="0.38"/><rect x="199.7" y="198.4" width="1" height="1" fill="#8ab0a0" fill-opacity="0.35"/><rect x="343.1" y="86.9" width="1" height="1" fill="#8ab0a0" fill-opacity="0.17"/><rect x="314.0" y="93.9" width="1" height="1" fill="#8ab0a0" fill-opacity="0.33"/><rect x="516.7" y="99.0" width="1" height="1" fill="#8ab0a0" fill-opacity="0.41"/><rect x="318.0" y="213.6" width="1" height="1" fill="#8ab0a0" fill-opacity="0.31"/><rect x="398.0" y="276.9" width="1" height="1" fill="#8ab0a0" fill-opacity="0.23"/><rect x="302.8" y="189.0" width="1" height="1" fill="#8ab0a0" fill-opacity="0.23"/><rect x="379.7" y="62.1" width="1" height="1" fill="#8ab0a0" fill-opacity="0.30"/><rect x="222.4" y="215.7" width="1" height="1" fill="#8ab0a0" fill-opacity="0.24"/><rect x="496.7" y="111.1" width="1" height="1" fill="#8ab0a0" fill-opacity="0.41"/><rect x="278.3" y="205.5" width="1" height="1" fill="#8ab0a0" fill-opacity="0.17"/><rect x="302.4" y="127.0" width="1" height="1" fill="#8ab0a0" fill-opacity="0.29"/><rect x="381.8" y="132.5" width="1" height="1" fill="#8ab0a0" fill-opacity="0.26"/><rect x="213.1" y="119.5" width="1" height="1" fill="#8ab0a0" fill-opacity="0.43"/><rect x="200.2" y="200.6" width="1" height="1" fill="#8ab0a0" fill-opacity="0.24"/><rect x="315.9" y="124.4" width="1" height="1" fill="#8ab0a0" fill-opacity="0.32"/><rect x="287.0" y="181.5" width="1" height="1" fill="#8ab0a0" fill-opacity="0.39"/><rect x="407.7" y="185.7" width="1" height="1" fill="#8ab0a0" fill-opacity="0.39"/><rect x="332.3" y="110.1" width="1" height="1" fill="#8ab0a0" fill-opacity="0.43"/><rect x="468.6" y="192.6" width="1" height="1" fill="#8ab0a0" fill-opacity="0.17"/><rect x="398.3" y="148.5" width="1" height="1" fill="#8ab0a0" fill-opacity="0.16"/><rect x="160.6" y="160.4" width="1" height="1" fill="#8ab0a0" fill-opacity="0.33"/><rect x="432.0" y="240.7" width="1" height="1" fill="#8ab0a0" fill-opacity="0.32"/><rect x="350.1" y="70.5" width="1" height="1" fill="#8ab0a0" fill-opacity="0.35"/><rect x="262.5" y="114.6" width="1" height="1" fill="#8ab0a0" fill-opacity="0.21"/><rect x="188.4" y="133.3" width="1" height="1" fill="#8ab0a0" fill-opacity="0.43"/><rect x="268.2" y="232.2" width="1" height="1" fill="#8ab0a0" fill-opacity="0.18"/><rect x="536.8" y="178.1" width="1" height="1" fill="#8ab0a0" fill-opacity="0.27"/><rect x="249.4" y="125.3" width="1" height="1" fill="#8ab0a0" fill-opacity="0.42"/><rect x="210.1" y="149.9" width="1" height="1" fill="#8ab0a0" fill-opacity="0.17"/><rect x="176.4" y="189.8" width="1" height="1" fill="#8ab0a0" fill-opacity="0.40"/><rect x="280.3" y="193.6" width="1" height="1" fill="#8ab0a0" fill-opacity="0.32"/><rect x="368.7" y="166.9" width="1" height="1" fill="#8ab0a0" fill-opacity="0.20"/><rect x="259.1" y="69.7" width="1" height="1" fill="#8ab0a0" fill-opacity="0.40"/><rect x="408.7" y="226.1" width="1" height="1" fill="#8ab0a0" fill-opacity="0.44"/><rect x="224.2" y="224.3" width="1" height="1" fill="#8ab0a0" fill-opacity="0.26"/><rect x="238.6" y="136.6" width="1" height="1" fill="#8ab0a0" fill-opacity="0.31"/><rect x="344.8" y="221.5" width="1" height="1" fill="#8ab0a0" fill-opacity="0.37"/><rect x="410.9" y="154.1" width="1" height="1" fill="#8ab0a0" fill-opacity="0.18"/><rect x="181.3" y="143.5" width="1" height="1" fill="#8ab0a0" fill-opacity="0.43"/><rect x="563.0" y="152.5" width="1" height="1" fill="#8ab0a0" fill-opacity="0.31"/><rect x="309.4" y="179.3" width="1" height="1" fill="#8ab0a0" fill-opacity="0.38"/><rect x="488.2" y="201.1" width="1" height="1" fill="#8ab0a0" fill-opacity="0.18"/><rect x="470.9" y="183.2" width="1" height="1" fill="#8ab0a0" fill-opacity="0.33"/><rect x="211.1" y="190.0" width="1" height="1" fill="#8ab0a0" fill-opacity="0.19"/><rect x="444.1" y="221.2" width="1" height="1" fill="#8ab0a0" fill-opacity="0.40"/><rect x="441.3" y="234.3" width="1" height="1" fill="#8ab0a0" fill-opacity="0.16"/><rect x="512.6" y="202.9" width="1" height="1" fill="#8ab0a0" fill-opacity="0.25"/><rect x="435.2" y="60.7" width="1" height="1" fill="#8ab0a0" fill-opacity="0.17"/><rect x="335.9" y="163.3" width="1" height="1" fill="#8ab0a0" fill-opacity="0.22"/><rect x="211.6" y="134.5" width="1" height="1" fill="#8ab0a0" fill-opacity="0.39"/><rect x="246.8" y="225.9" width="1" height="1" fill="#8ab0a0" fill-opacity="0.32"/><rect x="360.0" y="221.2" width="1" height="1" fill="#8ab0a0" fill-opacity="0.39"/><rect x="335.0" y="109.2" width="1" height="1" fill="#8ab0a0" fill-opacity="0.16"/><rect x="217.3" y="190.6" width="1" height="1" fill="#8ab0a0" fill-opacity="0.34"/><rect x="366.2" y="212.2" width="1" height="1" fill="#8ab0a0" fill-opacity="0.26"/><rect x="401.9" y="163.0" width="1" height="1" fill="#8ab0a0" fill-opacity="0.20"/><rect x="432.4" y="245.8" width="1" height="1" fill="#8ab0a0" fill-opacity="0.25"/><rect x="520.9" y="140.1" width="1" height="1" fill="#8ab0a0" fill-opacity="0.29"/><rect x="278.2" y="242.7" width="1" height="1" fill="#8ab0a0" fill-opacity="0.41"/><rect x="350.3" y="214.8" width="1" height="1" fill="#8ab0a0" fill-opacity="0.31"/><rect x="345.0" y="214.9" width="1" height="1" fill="#8ab0a0" fill-opacity="0.20"/><rect x="353.6" y="120.2" width="1" height="1" fill="#8ab0a0" fill-opacity="0.26"/><rect x="328.8" y="196.5" width="1" height="1" fill="#8ab0a0" fill-opacity="0.21"/><rect x="303.4" y="226.7" width="1" height="1" fill="#8ab0a0" fill-opacity="0.41"/><rect x="480.0" y="188.5" width="1" height="1" fill="#8ab0a0" fill-opacity="0.15"/><rect x="344.6" y="45.7" width="1" height="1" fill="#8ab0a0" fill-opacity="0.39"/><rect x="425.1" y="129.6" width="1" height="1" fill="#8ab0a0" fill-opacity="0.22"/><rect x="201.8" y="141.8" width="1" height="1" fill="#8ab0a0" fill-opacity="0.23"/><rect x="336.7" y="241.5" width="1" height="1" fill="#8ab0a0" fill-opacity="0.31"/><rect x="447.2" y="217.6" width="1" height="1" fill="#8ab0a0" fill-opacity="0.18"/><rect x="248.8" y="143.8" width="1" height="1" fill="#8ab0a0" fill-opacity="0.33"/><rect x="450.4" y="97.9" width="1" height="1" fill="#8ab0a0" fill-opacity="0.17"/><rect x="376.3" y="185.3" width="1" height="1" fill="#8ab0a0" fill-opacity="0.44"/><rect x="367.5" y="238.8" width="1" height="1" fill="#8ab0a0" fill-opacity="0.36"/><rect x="273.5" y="82.2" width="1" height="1" fill="#8ab0a0" fill-opacity="0.39"/><rect x="480.8" y="202.5" width="1" height="1" fill="#8ab0a0" fill-opacity="0.15"/><rect x="303.1" y="51.0" width="1" height="1" fill="#8ab0a0" fill-opacity="0.27"/><rect x="309.7" y="235.2" width="1" height="1" fill="#8ab0a0" fill-opacity="0.37"/><rect x="209.8" y="152.0" width="1" height="1" fill="#8ab0a0" fill-opacity="0.25"/><rect x="294.7" y="228.8" width="1" height="1" fill="#8ab0a0" fill-opacity="0.22"/><rect x="468.3" y="233.4" width="1" height="1" fill="#8ab0a0" fill-opacity="0.45"/><rect x="341.0" y="72.4" width="1" height="1" fill="#8ab0a0" fill-opacity="0.30"/><rect x="523.9" y="161.0" width="1" height="1" fill="#8ab0a0" fill-opacity="0.38"/><rect x="230.6" y="143.7" width="1" height="1" fill="#8ab0a0" fill-opacity="0.34"/><rect x="488.2" y="109.1" width="1" height="1" fill="#8ab0a0" fill-opacity="0.18"/><rect x="282.4" y="97.5" width="1" height="1" fill="#8ab0a0" fill-opacity="0.20"/><rect x="444.8" y="60.6" width="1" height="1" fill="#8ab0a0" fill-opacity="0.37"/><rect x="410.5" y="233.4" width="1" height="1" fill="#8ab0a0" fill-opacity="0.43"/><rect x="475.6" y="88.0" width="1" height="1" fill="#8ab0a0" fill-opacity="0.40"/><rect x="395.5" y="74.9" width="1" height="1" fill="#8ab0a0" fill-opacity="0.28"/><rect x="485.3" y="111.3" width="1" height="1" fill="#8ab0a0" fill-opacity="0.41"/><rect x="460.1" y="233.2" width="1" height="1" fill="#8ab0a0" fill-opacity="0.31"/><rect x="164.4" y="132.5" width="1" height="1" fill="#8ab0a0" fill-opacity="0.44"/><rect x="235.4" y="106.5" width="1" height="1" fill="#8ab0a0" fill-opacity="0.40"/><rect x="281.0" y="210.8" width="1" height="1" fill="#8ab0a0" fill-opacity="0.29"/><rect x="349.1" y="184.6" width="1" height="1" fill="#8ab0a0" fill-opacity="0.42"/><rect x="442.4" y="113.9" width="1" height="1" fill="#8ab0a0" fill-opacity="0.27"/><rect x="484.7" y="120.1" width="1" height="1" fill="#8ab0a0" fill-opacity="0.35"/><rect x="514.4" y="109.6" width="1" height="1" fill="#8ab0a0" fill-opacity="0.27"/><rect x="376.5" y="227.6" width="1" height="1" fill="#8ab0a0" fill-opacity="0.40"/><rect x="379.5" y="164.1" width="1" height="1" fill="#8ab0a0" fill-opacity="0.40"/><rect x="152.9" y="196.9" width="1" height="1" fill="#8ab0a0" fill-opacity="0.30"/><rect x="308.1" y="264.7" width="1" height="1" fill="#8ab0a0" fill-opacity="0.39"/><rect x="386.2" y="148.3" width="1" height="1" fill="#8ab0a0" fill-opacity="0.29"/><rect x="270.6" y="189.2" width="1" height="1" fill="#8ab0a0" fill-opacity="0.26"/><rect x="411.3" y="71.0" width="1" height="1" fill="#8ab0a0" fill-opacity="0.24"/><rect x="313.6" y="232.9" width="1" height="1" fill="#8ab0a0" fill-opacity="0.36"/><rect x="406.0" y="149.4" width="1" height="1" fill="#8ab0a0" fill-opacity="0.39"/><rect x="384.8" y="221.0" width="1" height="1" fill="#8ab0a0" fill-opacity="0.16"/><rect x="204.5" y="121.8" width="1" height="1" fill="#8ab0a0" fill-opacity="0.23"/><rect x="276.0" y="55.1" width="1" height="1" fill="#8ab0a0" fill-opacity="0.22"/><rect x="408.7" y="62.1" width="1" height="1" fill="#8ab0a0" fill-opacity="0.42"/><rect x="350.9" y="149.2" width="1" height="1" fill="#8ab0a0" fill-opacity="0.44"/><rect x="501.5" y="219.3" width="1" height="1" fill="#8ab0a0" fill-opacity="0.21"/><rect x="195.3" y="128.3" width="1" height="1" fill="#8ab0a0" fill-opacity="0.31"/><rect x="317.2" y="262.7" width="1" height="1" fill="#8ab0a0" fill-opacity="0.43"/><rect x="452.4" y="173.9" width="1" height="1" fill="#8ab0a0" fill-opacity="0.23"/><rect x="243.3" y="210.9" width="1" height="1" fill="#8ab0a0" fill-opacity="0.32"/><rect x="358.2" y="59.7" width="1" height="1" fill="#8ab0a0" fill-opacity="0.26"/><rect x="538.9" y="138.5" width="1" height="1" fill="#8ab0a0" fill-opacity="0.35"/><rect x="371.0" y="229.2" width="1" height="1" fill="#8ab0a0" fill-opacity="0.28"/><rect x="275.7" y="55.1" width="1" height="1" fill="#8ab0a0" fill-opacity="0.35"/><rect x="298.4" y="109.1" width="1" height="1" fill="#8ab0a0" fill-opacity="0.31"/><rect x="509.5" y="172.4" width="1" height="1" fill="#8ab0a0" fill-opacity="0.30"/><rect x="474.3" y="229.9" width="1" height="1" fill="#8ab0a0" fill-opacity="0.17"/><rect x="441.7" y="83.8" width="1" height="1" fill="#8ab0a0" fill-opacity="0.32"/><rect x="434.8" y="162.7" width="1" height="1" fill="#8ab0a0" fill-opacity="0.42"/><rect x="462.0" y="116.0" width="1" height="1" fill="#8ab0a0" fill-opacity="0.16"/><rect x="254.8" y="206.5" width="1" height="1" fill="#8ab0a0" fill-opacity="0.44"/><rect x="181.6" y="127.2" width="1" height="1" fill="#8ab0a0" fill-opacity="0.33"/><rect x="196.0" y="200.0" width="1" height="1" fill="#8ab0a0" fill-opacity="0.27"/></g>
<path d="M293.0,274.0 A64.4,66.8 0 0 1 409.0,274.0" fill="none" stroke="#903040" stroke-width="1.6" opacity="0.6" filter="url(#bl)"/>
<path d="M235.0,245.0 A128.8,133.5 0 0 1 467.0,245.0" fill="none" stroke="#803040" stroke-width="1.6" opacity="0.45" filter="url(#bl)"/>
<path d="M177.0,216.0 A193.2,200.2 0 0 1 525.0,216.0" fill="none" stroke="#6a2a30" stroke-width="1.6" opacity="0.32" filter="url(#bl)"/>
<path d="M299.1,249.2 A73.4,76.1 0 0 1 402.9,249.2" fill="none" stroke="#7a9a90" stroke-width="1" opacity="0.15"/>
<line x1="350.5" y1="303.0" x2="350.5" y2="36.0" stroke="#5a2a38" stroke-width="1" opacity="0.22"/>
<filter id="b7"><feGaussianBlur stdDeviation="1"/></filter><filter id="b12"><feGaussianBlur stdDeviation="1.6"/></filter>
<path d="M254,167 L261,158 L274,153 L285,149 L288,144 L297,142.5 L305,146.5 L306.5,153 L302,161 L288,164.5 L270,166 Z" fill="#7aa040" opacity="0.75" filter="url(#b12)"/>
<path d="M257,166 L266,160 L278,155.5 L287,151.5 L290,146.5 L297,145 L303,148.5 L303.5,156 L298,160.5 L285,163 L270,164.5 Z" fill="#c0d040" opacity="0.85" filter="url(#b7)"/>
<path d="M262,163.5 L276,158.5 L290,156 L300,155.5 L299,159 L286,161.5 L270,163.5 Z" fill="#f8f050" filter="url(#b7)"/>
<ellipse cx="296.5" cy="150.5" rx="2.5" ry="1.6" fill="#5a8040" opacity="0.45" filter="url(#b7)"/><path d="M270,158 L288,153" stroke="#f0f060" stroke-width="1.5" opacity="0.7" filter="url(#b7)"/>
<path d="M226,162.5 Q233,155 242.5,153.5 Q238,158 228,163 Z" fill="#e8f040" stroke="#d8e040" stroke-width="1.5" filter="url(#b7)"/>
<g filter="url(#bl)"><ellipse cx="178" cy="198" rx="5" ry="1" fill="#e0e850" opacity="0.9" transform="rotate(-62 178 198)"/><ellipse cx="197.5" cy="195.5" rx="5" ry="1" fill="#e0e850" opacity="0.9" transform="rotate(-60 197.5 195.5)"/><ellipse cx="243" cy="92" rx="4" ry="1.5" fill="#b0c050" opacity="0.35" transform="rotate(-20 243 92)"/><ellipse cx="473" cy="141" rx="3.5" ry="1.8" fill="#e0f040" opacity="0.95" transform="rotate(30 473 141)"/><ellipse cx="252" cy="177" rx="2.5" ry="1.2" fill="#c8d040" opacity="0.8" transform="rotate(-50 252 177)"/><ellipse cx="266" cy="188" rx="2.5" ry="1.2" fill="#c8d040" opacity="0.7" transform="rotate(-50 266 188)"/><ellipse cx="260.8" cy="222" rx="3" ry="1.5" fill="#e0e040" opacity="0.9" transform="rotate(-40 260.8 222)"/><ellipse cx="345" cy="209.5" rx="1.6" ry="1.2" fill="#d0e060" opacity="0.7" transform="rotate(0 345 209.5)"/><ellipse cx="345" cy="228.8" rx="2.2" ry="1.4" fill="#e8f080" opacity="0.9" transform="rotate(-20 345 228.8)"/><ellipse cx="313" cy="183.8" rx="1.6" ry="1" fill="#b0c860" opacity="0.6" transform="rotate(0 313 183.8)"/><ellipse cx="375.5" cy="190" rx="1.6" ry="1" fill="#b0c860" opacity="0.5" transform="rotate(0 375.5 190)"/><ellipse cx="386.8" cy="209.5" rx="1.5" ry="1" fill="#b0c860" opacity="0.5" transform="rotate(0 386.8 209.5)"/><ellipse cx="396.5" cy="225.6" rx="1.5" ry="1" fill="#b0c860" opacity="0.5" transform="rotate(0 396.5 225.6)"/><ellipse cx="310" cy="276" rx="2" ry="1" fill="#a0c060" opacity="0.4" transform="rotate(0 310 276)"/><ellipse cx="333.7" cy="266.7" rx="2" ry="1.4" fill="#a0c060" opacity="0.45" transform="rotate(0 333.7 266.7)"/><ellipse cx="250" cy="175" rx="2" ry="1" fill="#d0d040" opacity="0.8" transform="rotate(-40 250 175)"/><ellipse cx="245" cy="188" rx="2" ry="1" fill="#c0c040" opacity="0.7" transform="rotate(-40 245 188)"/><ellipse cx="257" cy="164" rx="2" ry="1" fill="#c0c040" opacity="0.5" transform="rotate(-40 257 164)"/><ellipse cx="160" cy="195" rx="2.5" ry="0.8" fill="#b0c050" opacity="0.6" transform="rotate(-70 160 195)"/><ellipse cx="321" cy="214" rx="1.4" ry="1" fill="#a0c070" opacity="0.45" transform="rotate(0 321 214)"/><ellipse cx="332" cy="190" rx="1.4" ry="1" fill="#a0c070" opacity="0.45" transform="rotate(0 332 190)"/><ellipse cx="374" cy="211" rx="1.4" ry="1" fill="#a0c070" opacity="0.45" transform="rotate(0 374 211)"/><ellipse cx="364" cy="227" rx="1.4" ry="1" fill="#a0c070" opacity="0.45" transform="rotate(0 364 227)"/><ellipse cx="313" cy="272" rx="1.4" ry="1" fill="#a0c070" opacity="0.4" transform="rotate(0 313 272)"/><ellipse cx="384" cy="203" rx="1.4" ry="1" fill="#a0c070" opacity="0.45" transform="rotate(0 384 203)"/><ellipse cx="388" cy="210" rx="1.4" ry="1" fill="#a0c070" opacity="0.45" transform="rotate(0 388 210)"/><ellipse cx="395" cy="222" rx="1.4" ry="1" fill="#a0c070" opacity="0.45" transform="rotate(0 395 222)"/></g>
</g>
<path d="M351.0,303.0 L119.0,187.0 A257.6,267.0 0 0 1 583.0,187.0 Z" fill="none" stroke="#4a6470" stroke-width="1" opacity="0.5"/>
<g fill="#e01010" stroke="#b00000" stroke-width="0.25" font-family="Liberation Sans" font-size="7"><text x="347" y="29.5">0°</text><text x="210" y="66.5">-30°</text><text x="479.5" y="66.5">30°</text><text x="112" y="169">-60°</text><text x="578.5" y="169">60°</text><text x="107" y="195.5">20 m</text><text x="581" y="195.5">20 m</text><text x="165" y="224">15 m</text><text x="224" y="254">10 m</text><text x="284" y="283">5 m</text><text x="523" y="224">15 m</text><text x="465" y="254">10 m</text><text x="407" y="283">5 m</text></g>
<rect x="342.5" y="304" width="17.5" height="8.5" fill="#6a6a6a"/><path d="M342.9,312.5 V304.4 H360" stroke="#a8a8a8" stroke-width="0.9" fill="none"/><path d="M344,307.5 H359 M344,310 H359" stroke="#7a7a7a" stroke-width="0.6"/>
<g fill="#d81010" stroke="#a00000" stroke-width="0.1" font-family="Liberation Sans" font-size="6.6"><text x="111" y="251.4">Signal Analysis Mode  -</text><text x="111" y="262.3">Ping Number</text><text x="160" y="262.3">10555</text><text x="111" y="270.4">Range</text><text x="160" y="270.4">20.0 m</text><text x="111" y="278.5">Power</text><text x="160" y="278.5">209.0 dB</text><text x="111" y="286.6">Gain (TVG)</text><text x="160" y="286.6">43.0 dB</text><text x="111" y="294.7">Ping Rate</text><text x="160" y="294.7">29.3 p/s</text><text x="111" y="302.8">Pulse Width</text><text x="160" y="302.8">65 µs</text><text x="111" y="310.9">Pulse Type</text><text x="160" y="310.9">CW</text></g>
</svg>
<div class="abs" style="left:1px;top:337px;width:597px;height:2px;background:#fafafa"></div>
<div class="abs" style="left:0px;top:362px;width:598px;height:1px;background:#f8f8f8"></div>
<div class="abs" style="left:0px;top:363px;width:598px;height:2px;background:#808080"></div>
<div class="abs" style="left:0px;top:365px;width:600px;height:2px;background:#fafafa"></div>
<div class="abs" style="left:0px;top:367px;width:600px;height:1px;background:#606060"></div>
<svg style="left:3px;top:341px" width="58" height="20"><defs><linearGradient id="rg" gradientUnits="userSpaceOnUse" x1="0" y1="3" x2="0" y2="17"><stop offset="0.1" stop-color="#2aa8b8"/><stop offset="0.4" stop-color="#3cc4d4"/><stop offset="0.62" stop-color="#1a6a8a"/><stop offset="0.85" stop-color="#0a2848"/><stop offset="1" stop-color="#06162a"/></linearGradient></defs><text x="1.5" y="16.8" font-family="Liberation Sans" font-size="21" fill="url(#rg)" stroke="url(#rg)" stroke-width="0.5" textLength="54" lengthAdjust="spacingAndGlyphs">RESON</text></svg>
<div class="abs" style="left:61.5px;top:343.5px;width:38.5px;height:13px;background:#fff890;border:1px solid #3a3a20;border-radius:2px;box-shadow:inset 1px 1px #fffce0"></div>
<svg style="left:60px;top:340px" width="42" height="18"><text x="5.3" y="13" font-family="Liberation Sans" font-size="7.8" fill="#1a1a00" stroke="#1a1a00" stroke-width="0.2" textLength="30.7" lengthAdjust="spacingAndGlyphs">WARNING</text></svg>
<div class="abs" style="left:104px;top:341px;width:48px;height:20px;border:1px solid #b0ada6;box-shadow:inset 1px 1px #f4f4f0, 1px 1px #f4f4f0"></div>
<div class="t" style="left:108px;top:344.98px;font-size:5.0px;line-height:5.0px;">1PPS +</div>
<div class="t" style="left:108px;top:352.98px;font-size:5.0px;line-height:5.0px;">Normalization</div>
<div class="abs" style="left:144px;top:344.5px;width:4px;height:4px;border-radius:50%;background:#e8d860"></div>
<div class="abs" style="left:144px;top:353px;width:4px;height:4px;border-radius:50%;background:#40c040"></div>
<div class="abs" style="left:155px;top:340px;width:26px;height:11px;background:#d1d1cb;border:1px solid;border-color:#fff #404040 #404040 #fff;box-shadow:inset -1px -1px #808080"></div>
<div class="t" style="left:160px;top:343.28px;font-size:5.0px;line-height:5.0px;">Freeze</div>
<div class="abs" style="left:155px;top:351px;width:26px;height:10px;background:#d1d1cb;border:1px solid;border-color:#fff #404040 #404040 #fff;box-shadow:inset -1px -1px #808080"></div>
<div class="t" style="left:162.5px;top:353.28px;font-size:5.0px;line-height:5.0px;">Max</div>
<div class="abs" style="left:182px;top:341px;width:67px;height:20px;border:1px solid #b0ada6;box-shadow:inset 1px 1px #f4f4f0, 1px 1px #f4f4f0"></div>
<div class="t" style="left:186px;top:350.43px;font-size:5.6px;line-height:5.6px;">Mode</div>
<div class="abs" style="left:202px;top:345px;width:43px;height:11px;background:#fff;border:1px solid;border-color:#808080 #fff #fff #808080;box-shadow:inset 1px 1px #404040"></div>
<div class="t" style="left:204.5px;top:349.48px;font-size:5.0px;line-height:5.0px;">Manual</div>
<div class="abs" style="left:236px;top:347px;width:8px;height:8px;background:#d1d1cb;border:1px solid;border-color:#fff #404040 #404040 #fff;box-shadow:inset -1px -1px #808080"></div>
<svg style="left:238px;top:349px" width="5" height="4"><path d="M0.5,0.5 L4.5,0.5 L2.5,3 Z" fill="#000"/></svg>
<div class="abs" style="left:252px;top:341px;width:117px;height:20px;border:1px solid #b0ada6;box-shadow:inset 1px 1px #f4f4f0, 1px 1px #f4f4f0"></div>
<div class="t" style="left:255px;top:344.98px;font-size:5.0px;line-height:5.0px;">Range:</div>
<div class="t" style="left:280px;top:344.98px;font-size:5.0px;line-height:5.0px;">--</div>
<div class="t" style="left:255px;top:352.98px;font-size:5.0px;line-height:5.0px;">Bearing:</div>
<div class="t" style="left:280px;top:352.98px;font-size:5.0px;line-height:5.0px;">--</div>
<div class="abs" style="left:373px;top:341px;width:117px;height:20px;border:1px solid #b0ada6;box-shadow:inset 1px 1px #f4f4f0, 1px 1px #f4f4f0"></div>
<div class="t" style="left:376px;top:344.98px;font-size:5.0px;line-height:5.0px;">Ship</div>
<div class="t" style="left:376px;top:352.98px;font-size:5.0px;line-height:5.0px;">Heading:</div>
<div class="t" style="left:400px;top:352.98px;font-size:5.0px;line-height:5.0px;">0.00°</div>
<div class="abs" style="left:0px;top:368px;width:1px;height:98px;background:#606060"></div>
<div class="abs" style="left:2px;top:368px;width:2px;height:98px;background:#e6e6e2"></div>
<div class="t" style="left:6.7px;top:374.98px;font-size:5.0px;line-height:5.0px;">Main Sonar Settings</div>
<div class="t" style="left:57.5px;top:374.98px;font-size:5.0px;line-height:5.0px;">Ocean Menu</div>
<div class="t" style="left:91px;top:374.98px;font-size:5.0px;line-height:5.0px;">Primary Display Settings</div>
<div class="t" style="left:158px;top:374.98px;font-size:5.0px;line-height:5.0px;">Data Recording</div>
<div class="abs" style="left:151.5px;top:374.5px;width:4px;height:4px;border-radius:50%;background:#909090"></div>
<div class="t" style="left:210px;top:374.98px;font-size:5.0px;line-height:5.0px;">Screen Recording</div>
<div class="abs" style="left:203.5px;top:374.5px;width:4px;height:4px;border-radius:50%;background:#30c030"></div>
<div class="t" style="left:265px;top:374.98px;font-size:5.0px;line-height:5.0px;">I/O Module Setup</div>
<div class="abs" style="left:258.5px;top:374.5px;width:4px;height:4px;border-radius:50%;background:#e02020"></div>
<div class="abs" style="left:55px;top:372px;width:1px;height:10px;background:#505050"></div>
<div class="abs" style="left:86.5px;top:372px;width:1px;height:10px;background:#505050"></div>
<div class="abs" style="left:148px;top:372px;width:1px;height:10px;background:#505050"></div>
<div class="abs" style="left:197.5px;top:372px;width:1px;height:10px;background:#505050"></div>
<div class="abs" style="left:253px;top:372px;width:1px;height:10px;background:#505050"></div>
<div class="abs" style="left:309px;top:372px;width:1px;height:10px;background:#505050"></div>
<div class="abs" style="left:4px;top:371.5px;width:51px;height:11px;border-top:1px solid #e8e8e4"></div>
<div class="abs" style="left:5px;top:382px;width:473px;height:81px;border:1px solid;border-color:#e8e8e4 #404040 #404040 #e8e8e4;box-shadow:inset -1px -1px #909090"></div>
<div class="abs" style="left:594px;top:368px;width:1px;height:98px;background:#e8e6e0"></div>
<div class="t" style="left:12.5px;top:387.48px;font-size:5.0px;line-height:5.0px;">Range</div>
<div class="abs" style="left:13px;top:392.5px;width:56px;height:9.5px;background:#ebebe8"></div>
<div class="abs" style="left:13px;top:393.0px;width:56px;height:4.5px;background:#f3f3f1"></div>
<div class="abs" style="left:13px;top:392.5px;width:7.5px;height:9.5px;background:#f2f2f0;border-right:1px solid #303030;border-bottom:1px solid #303030;box-shadow:inset -1px -1px #b0b0b0"></div>
<svg style="left:15.3px;top:395.3px" width="3" height="4"><path d="M2.5,0 L2.5,4 L0,2 Z" fill="#000"/></svg>
<div class="abs" style="left:61.5px;top:392.5px;width:7.5px;height:9.5px;background:#f2f2f0;border-right:1px solid #303030;border-bottom:1px solid #303030;box-shadow:inset -1px -1px #b0b0b0"></div>
<svg style="left:64px;top:395.3px" width="3" height="4"><path d="M0,0 L0,4 L2.5,2 Z" fill="#000"/></svg>
<div class="abs" style="left:29px;top:393.0px;width:6.5px;height:8.5px;background:#6a6a6a;border-right:1px solid #404040"></div>
<div class="t" style="left:71px;top:394.82px;font-size:5.5px;line-height:5.5px;"><b>20.0 m</b></div>
<div class="t" style="left:12.5px;top:404.28px;font-size:5.0px;line-height:5.0px;">5.0</div>
<div class="t" style="left:56px;top:404.28px;font-size:5.0px;line-height:5.0px;">300.0</div>
<div class="t" style="left:107px;top:387.20px;font-size:5.3px;line-height:5.3px;">Max Rate</div>
<div class="abs" style="left:107.5px;top:392.5px;width:56px;height:9.5px;background:#ebebe8"></div>
<div class="abs" style="left:107.5px;top:393.0px;width:56px;height:4.5px;background:#f3f3f1"></div>
<div class="abs" style="left:107.5px;top:392.5px;width:7.5px;height:9.5px;background:#f2f2f0;border-right:1px solid #303030;border-bottom:1px solid #303030;box-shadow:inset -1px -1px #b0b0b0"></div>
<svg style="left:109.8px;top:395.3px" width="3" height="4"><path d="M2.5,0 L2.5,4 L0,2 Z" fill="#000"/></svg>
<div class="abs" style="left:156.0px;top:392.5px;width:7.5px;height:9.5px;background:#f2f2f0;border-right:1px solid #303030;border-bottom:1px solid #303030;box-shadow:inset -1px -1px #b0b0b0"></div>
<svg style="left:158.5px;top:395.3px" width="3" height="4"><path d="M0,0 L0,4 L2.5,2 Z" fill="#000"/></svg>
<div class="abs" style="left:149.5px;top:392.5px;width:7.5px;height:9.5px;background:#f2f2f0;border-right:1px solid #303030;border-bottom:1px solid #303030;box-shadow:inset -1px -1px #b0b0b0"></div>
<div class="t" style="left:166px;top:394.82px;font-size:5.5px;line-height:5.5px;"><b>50.0 p/s</b></div>
<div class="t" style="left:107px;top:404.28px;font-size:5.0px;line-height:5.0px;">0</div>
<div class="t" style="left:158.5px;top:404.28px;font-size:5.0px;line-height:5.0px;">50</div>
<div class="t" style="left:12.5px;top:412.48px;font-size:5.0px;line-height:5.0px;">Power</div>
<div class="abs" style="left:13px;top:417.5px;width:56px;height:9.5px;background:#ebebe8"></div>
<div class="abs" style="left:13px;top:418.0px;width:56px;height:4.5px;background:#f3f3f1"></div>
<div class="abs" style="left:13px;top:417.5px;width:7.5px;height:9.5px;background:#f2f2f0;border-right:1px solid #303030;border-bottom:1px solid #303030;box-shadow:inset -1px -1px #b0b0b0"></div>
<svg style="left:15.3px;top:420.3px" width="3" height="4"><path d="M2.5,0 L2.5,4 L0,2 Z" fill="#000"/></svg>
<div class="abs" style="left:61.5px;top:417.5px;width:7.5px;height:9.5px;background:#f2f2f0;border-right:1px solid #303030;border-bottom:1px solid #303030;box-shadow:inset -1px -1px #b0b0b0"></div>
<svg style="left:64px;top:420.3px" width="3" height="4"><path d="M0,0 L0,4 L2.5,2 Z" fill="#000"/></svg>
<div class="abs" style="left:55px;top:417.5px;width:7.5px;height:9.5px;background:#f2f2f0;border-right:1px solid #303030;border-bottom:1px solid #303030;box-shadow:inset -1px -1px #b0b0b0"></div>
<div class="t" style="left:71px;top:419.82px;font-size:5.5px;line-height:5.5px;"><b>209 dB</b></div>
<div class="t" style="left:12.5px;top:429.28px;font-size:5.0px;line-height:5.0px;">OFF</div>
<div class="t" style="left:60.5px;top:429.28px;font-size:5.0px;line-height:5.0px;">209</div>
<div class="t" style="left:107.5px;top:412.48px;font-size:5.0px;line-height:5.0px;">Gain</div>
<div class="abs" style="left:107.5px;top:417.5px;width:56px;height:9.5px;background:#ebebe8"></div>
<div class="abs" style="left:107.5px;top:418.0px;width:56px;height:4.5px;background:#f3f3f1"></div>
<div class="abs" style="left:107.5px;top:417.5px;width:7.5px;height:9.5px;background:#f2f2f0;border-right:1px solid #303030;border-bottom:1px solid #303030;box-shadow:inset -1px -1px #b0b0b0"></div>
<svg style="left:109.8px;top:420.3px" width="3" height="4"><path d="M2.5,0 L2.5,4 L0,2 Z" fill="#000"/></svg>
<div class="abs" style="left:156.0px;top:417.5px;width:7.5px;height:9.5px;background:#f2f2f0;border-right:1px solid #303030;border-bottom:1px solid #303030;box-shadow:inset -1px -1px #b0b0b0"></div>
<svg style="left:158.5px;top:420.3px" width="3" height="4"><path d="M0,0 L0,4 L2.5,2 Z" fill="#000"/></svg>
<div class="abs" style="left:133px;top:417.5px;width:7.5px;height:9.5px;background:#f2f2f0;border-right:1px solid #303030;border-bottom:1px solid #303030;box-shadow:inset -1px -1px #b0b0b0"></div>
<div class="t" style="left:166px;top:419.82px;font-size:5.5px;line-height:5.5px;"><b>43.0 dB</b></div>
<div class="t" style="left:107px;top:429.28px;font-size:5.0px;line-height:5.0px;">0.0</div>
<div class="t" style="left:153px;top:429.28px;font-size:5.0px;line-height:5.0px;">83.0</div>
<div class="t" style="left:199.5px;top:412.48px;font-size:5.0px;line-height:5.0px;">Pulse Length</div>
<div class="abs" style="left:199.5px;top:417.5px;width:56px;height:9.5px;background:#ebebe8"></div>
<div class="abs" style="left:199.5px;top:418.0px;width:56px;height:4.5px;background:#f3f3f1"></div>
<div class="abs" style="left:199.5px;top:417.5px;width:7.5px;height:9.5px;background:#f2f2f0;border-right:1px solid #303030;border-bottom:1px solid #303030;box-shadow:inset -1px -1px #b0b0b0"></div>
<svg style="left:201.8px;top:420.3px" width="3" height="4"><path d="M2.5,0 L2.5,4 L0,2 Z" fill="#000"/></svg>
<div class="abs" style="left:248.0px;top:417.5px;width:7.5px;height:9.5px;background:#f2f2f0;border-right:1px solid #303030;border-bottom:1px solid #303030;box-shadow:inset -1px -1px #b0b0b0"></div>
<svg style="left:250.5px;top:420.3px" width="3" height="4"><path d="M0,0 L0,4 L2.5,2 Z" fill="#000"/></svg>
<div class="abs" style="left:218.5px;top:417.5px;width:7.5px;height:9.5px;background:#f2f2f0;border-right:1px solid #303030;border-bottom:1px solid #303030;box-shadow:inset -1px -1px #b0b0b0"></div>
<div class="t" style="left:257.5px;top:419.82px;font-size:5.5px;line-height:5.5px;"><b>6.5 µs</b></div>
<div class="t" style="left:200px;top:429.28px;font-size:5.0px;line-height:5.0px;">30</div>
<div class="t" style="left:247.5px;top:429.28px;font-size:5.0px;line-height:5.0px;">300</div>
<div class="t" style="left:375px;top:387.20px;font-size:5.3px;line-height:5.3px;">Frequency</div>
<div class="abs" style="left:375px;top:393.5px;width:5px;height:5px;border-radius:50%;background:#fff;border:1px solid;border-color:#808080 #fff #fff #808080"></div>
<div class="t" style="left:382.5px;top:394.28px;font-size:5.0px;line-height:5.0px;">200 kHz</div>
<div class="abs" style="left:407.5px;top:393.5px;width:5px;height:5px;border-radius:50%;background:#fff;border:1px solid;border-color:#808080 #fff #fff #808080"></div>
<div class="abs" style="left:409.2px;top:395.2px;width:1.6px;height:1.6px;border-radius:50%;background:#000"></div>
<div class="t" style="left:415px;top:394.28px;font-size:5.0px;line-height:5.0px;">400 kHz</div>
</body></html>
